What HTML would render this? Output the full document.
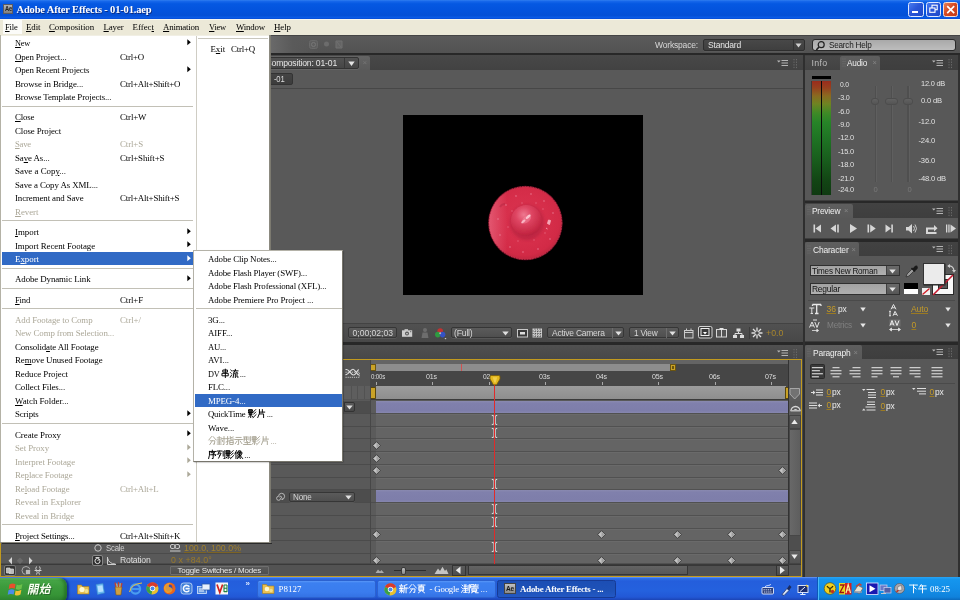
<!DOCTYPE html>
<html><head><meta charset="utf-8"><title>Adobe After Effects - 01-01.aep</title>
<style>
html,body{margin:0;padding:0;overflow:hidden;}
#c{position:absolute;left:0;top:0;width:960px;height:600px;overflow:hidden;}
body{width:960px;height:600px;overflow:hidden;position:relative;background:#2b2b2b;font-family:'Liberation Sans',sans-serif;}
#r{position:absolute;left:0;top:0;width:960px;height:600px;will-change:transform;filter:blur(0.45px);}
#r>div,#r>span,#r>svg{position:absolute;}
#r>span{white-space:pre;}
svg{overflow:visible;}
</style></head><body><div id="c"><div id="r">
<div style="left:-4px;top:35px;width:968px;height:542px;background:#282828;"></div>
<div style="left:-4px;top:35px;width:968px;height:17.9px;background:linear-gradient(#5b5b5b,#525252);"></div>
<div style="left:-4px;top:34.7px;width:968px;height:0.8px;background:#454545;"></div>
<div style="left:270px;top:35.5px;width:50px;height:17.4px;background:linear-gradient(90deg,#6a6a6a,#5a5a5a 45%,#57575700);"></div>
<svg style="left:309px;top:39px" width="40" height="12"><rect x="0.5" y="1.5" width="8" height="8" rx="2" fill="#5f5f5f" stroke="#6a6a6a"/><circle cx="4.5" cy="5.5" r="2" fill="none" stroke="#777"/><circle cx="17.5" cy="5" r="2.5" fill="#6c6c6c"/><path d="M27,2 l6,0 l0,7 l-6,0z M28,3 l4,5" fill="#646464" stroke="#707070"/></svg>
<span style="left:655px;top:39.00px;line-height:12px;font-family:'Liberation Sans',sans-serif;font-size:8.5px;color:#d8d8d8;letter-spacing:-0.173px;">Workspace:</span>
<div style="left:703px;top:38.5px;width:102px;height:12.5px;background:linear-gradient(#484848,#3f3f3f);border:1px solid #2e2e2e;border-radius:2px;box-sizing:border-box;box-shadow:0 0.8px 0 #5e5e5e;"></div>
<span style="left:708px;top:39.00px;line-height:12px;font-family:'Liberation Sans',sans-serif;font-size:8.5px;color:#e6e6e6;letter-spacing:-0.188px;">Standard</span>
<div style="left:793px;top:39.5px;width:1px;height:10.5px;background:#333;"></div>
<svg style="left:795px;top:43px" width="8" height="6"><path d="M0.5,0.5 L6.5,0.5 L3.5,4.5Z" fill="#d0d0d0"/></svg>
<div style="left:812px;top:38.5px;width:143.5px;height:12.7px;background:linear-gradient(#a9a9a9,#bdbdbd);border:1px solid #2a2a2a;border-radius:3px;box-sizing:border-box;"></div>
<svg style="left:815px;top:39.5px" width="12" height="12"><circle cx="6.2" cy="4.7" r="3" fill="none" stroke="#222" stroke-width="1.2"/><path d="M4,7 L1.3,10" stroke="#222" stroke-width="1.6"/></svg>
<span style="left:828.5px;top:39.00px;line-height:12px;font-family:'Liberation Sans',sans-serif;font-size:8.5px;color:#1a1a1a;letter-spacing:-0.220px;transform:scaleX(0.958);transform-origin:0 50%;">Search Help</span>
<div style="left:0px;top:55px;width:802.5px;height:287px;background:#595959;"></div>
<div style="left:0px;top:55px;width:802.5px;height:15px;background:linear-gradient(#484848,#424242);"></div>
<div style="left:270px;top:55.5px;width:100px;height:14.5px;background:linear-gradient(#646464,#5a5a5a);border-radius:2px 2px 0 0;"></div>
<div style="left:258px;top:57.3px;width:100.7px;height:11.7px;background:linear-gradient(#525252,#464646);border:1px solid #333;border-radius:2px;box-sizing:border-box;box-shadow:0 0.8px 0 #6a6a6a;"></div>
<span style="left:265.5px;top:57.00px;line-height:12px;font-family:'Liberation Sans',sans-serif;font-size:8.6px;color:#e6e6e6;letter-spacing:-0.168px;">Composition: 01-01</span>
<div style="left:343.7px;top:58.3px;width:1px;height:9.7px;background:#383838;"></div>
<svg style="left:347.5px;top:60.5px" width="8" height="6"><path d="M0.3,0.5 L6.7,0.5 L3.5,5Z" fill="#e4e4e4"/></svg>
<span style="left:362.5px;top:57.00px;line-height:12px;font-family:'Liberation Sans',sans-serif;font-size:8px;color:#757575;">×</span>
<svg style="left:776.5px;top:58.5px" width="12" height="9"><path d="M0,1.5 L3.6,1.5 L1.8,3.6Z" fill="#b8b8b8"/><path d="M4.5,1.5 H11 M4.5,4 H11 M4.5,6.5 H11" stroke="#b4b4b4" stroke-width="1.05"/></svg>
<svg style="left:792.5px;top:57.5px" width="6" height="12"><path d="M1,1 V11 M3.5,1 V11" stroke="#6a6a6a" stroke-width="1" stroke-dasharray="1.3,1.3"/></svg>
<div style="left:0px;top:70px;width:802.5px;height:17.7px;background:#595959;"></div>
<div style="left:0px;top:87.7px;width:802.5px;height:1px;background:#474747;"></div>
<div style="left:262px;top:73px;width:30.5px;height:12px;background:linear-gradient(#444,#3c3c3c);border:1px solid #333;border-radius:2px;box-sizing:border-box;"></div>
<span style="left:274px;top:73.30px;line-height:12px;font-family:'Liberation Sans',sans-serif;font-size:8.8px;color:#dcdcdc;letter-spacing:-0.220px;transform:scaleX(0.871);transform-origin:0 50%;">-01</span>
<div style="left:403px;top:115.3px;width:239.7px;height:180px;background:#000;"></div>
<svg style="left:483px;top:180px" width="86" height="86" viewBox="-43 -43 86 86">
<defs><radialGradient id="bg1" cx="0.48" cy="0.45" r="0.56"><stop offset="0" stop-color="#d93450"/><stop offset="0.6" stop-color="#d62e4a"/><stop offset="0.88" stop-color="#d22a46"/><stop offset="1" stop-color="#c0263f"/></radialGradient>
<radialGradient id="bg2" cx="0.42" cy="0.32" r="0.75"><stop offset="0" stop-color="#ee7890"/><stop offset="0.35" stop-color="#de4562"/><stop offset="0.8" stop-color="#c62844"/><stop offset="1" stop-color="#b01e3a"/></radialGradient>
<linearGradient id="bg3" x1="0" y1="0" x2="1" y2="0"><stop offset="0" stop-color="#f07a92" stop-opacity="0.55"/><stop offset="0.25" stop-color="#f07a92" stop-opacity="0"/></linearGradient>
<filter id="bl"><feGaussianBlur stdDeviation="0.7"/></filter><filter id="bl2"><feGaussianBlur stdDeviation="1.4"/></filter></defs>
<circle cx="-0.6" cy="0" r="37.3" fill="#6a1022" filter="url(#bl)"/>
<circle cx="-0.6" cy="0" r="36.3" fill="url(#bg1)" stroke="#cc3a56" stroke-width="0.9" stroke-dasharray="1.5,1.2"/>
<circle cx="-0.6" cy="0" r="36.3" fill="url(#bg3)"/>
<ellipse cx="1" cy="-0.5" rx="17" ry="17.5" fill="#a81c3a" opacity="0.5" filter="url(#bl2)"/>
<circle cx="0.3" cy="-2.6" r="15.4" fill="url(#bg2)" filter="url(#bl)"/>
<g><ellipse cx="2.2" cy="-6.2" rx="3" ry="1.25" transform="rotate(-40 2.2 -6.2)" fill="#ffe0e6" opacity="0.9"/><ellipse cx="-2.6" cy="-1.6" rx="2.6" ry="1.15" transform="rotate(-40 -2.6 -1.6)" fill="#ffd6de" opacity="0.85"/><ellipse cx="0.5" cy="-3.6" rx="5.5" ry="3" transform="rotate(-40 0.5 -3.6)" fill="#f8a0b4" opacity="0.35"/>
<path d="M22.5,-3 l2,0.5 l-1,4 l-2,-1z M20,5 l1.5,1" fill="#f8b8c6" stroke="#f8b8c6" stroke-width="0.9" opacity="0.9"/>
<path d="M-26,-16 q2,-3 5,-3" stroke="#b02640" stroke-width="2" fill="none" opacity="0.45"/></g>
<g fill="#ee8aa0" opacity="0.5"><circle cx="-20" cy="-18" r=".9"/><circle cx="-10" cy="-27" r=".9"/><circle cx="5" cy="-29" r=".9"/><circle cx="18" cy="-22" r=".9"/><circle cx="27" cy="-10" r=".9"/><circle cx="-28" cy="-4" r=".9"/><circle cx="-26" cy="12" r=".9"/><circle cx="-16" cy="24" r=".9"/><circle cx="-3" cy="29" r=".9"/><circle cx="12" cy="26" r=".9"/><circle cx="24" cy="16" r=".9"/><circle cx="-14" cy="-12" r=".8"/><circle cx="-18" cy="4" r=".8"/><circle cx="-8" cy="18" r=".8"/><circle cx="8" cy="17" r=".8"/><circle cx="17" cy="-14" r=".8"/><circle cx="19" cy="10" r=".8"/><circle cx="-4" cy="-20" r=".8"/><circle cx="10" cy="-20" r=".8"/></g>
</svg>
<div style="left:0px;top:323.2px;width:802.5px;height:18.5px;background:linear-gradient(#515151,#484848);"></div>
<div style="left:0px;top:323.2px;width:802.5px;height:1px;background:#434343;"></div>
<div style="left:348px;top:327.2px;width:49px;height:11px;background:linear-gradient(#5b5b5b,#4f4f4f);border:1px solid #363636;border-radius:2px;box-sizing:border-box;box-shadow:0 0.8px 0 #5c5c5c;"></div>
<span style="left:352.5px;top:327.00px;line-height:12px;font-family:'Liberation Sans',sans-serif;font-size:8.6px;color:#d6d6d6;letter-spacing:-0.013px;">0;00;02;03</span>
<svg style="left:402px;top:328.5px" width="12" height="9"><rect x="0" y="1.3" width="10.2" height="6.5" fill="#cfcfcf"/><rect x="2.5" y="0.2" width="3.5" height="1.6" fill="#cfcfcf"/><circle cx="5" cy="4.6" r="2" fill="#555"/><circle cx="5" cy="4.6" r="0.9" fill="#cfcfcf"/><rect x="8" y="2.2" width="1.3" height="1" fill="#666"/></svg>
<svg style="left:420px;top:327px" width="10" height="12"><circle cx="5" cy="3" r="2" fill="#6d6d6d"/><path d="M1.5,11 L2.5,5.5 H7.5 L8.5,11Z" fill="#6d6d6d"/></svg>
<svg style="left:434px;top:326.5px" width="14" height="13"><circle cx="6.2" cy="4" r="2.8" fill="#c23232"/><circle cx="3.8" cy="7.6" r="2.8" fill="#2f9a40"/><circle cx="8.6" cy="7.6" r="2.8" fill="#3552c4"/><circle cx="6.2" cy="6.3" r="1" fill="#b8b8b8"/><path d="M10.5,11 l2,0 l-1,1.5z" fill="#ccc"/></svg>
<div style="left:450.5px;top:327.2px;width:61.5px;height:11px;background:linear-gradient(#5b5b5b,#4f4f4f);border:1px solid #363636;border-radius:2px;box-sizing:border-box;box-shadow:0 0.8px 0 #5c5c5c;"></div>
<span style="left:454px;top:326.80px;line-height:12px;font-family:'Liberation Sans',sans-serif;font-size:8.8px;color:#d6d6d6;letter-spacing:-0.220px;transform:scaleX(0.988);transform-origin:0 50%;">(Full)</span>
<svg style="left:502px;top:331px" width="8" height="6"><path d="M0.3,0.5 L6.7,0.5 L3.5,4.6Z" fill="#e0e0e0"/></svg>
<svg style="left:516.5px;top:328.5px" width="12" height="9"><rect x="0.5" y="0.5" width="10" height="7.5" fill="#3a3a3a" stroke="#c8c8c8"/><rect x="3" y="3" width="5" height="2.5" fill="#ddd"/></svg>
<svg style="left:532px;top:328px" width="11" height="10"><rect x="0.5" y="0.5" width="9.5" height="9" fill="#cfcfcf"/><path d="M0.5,3 H10 M0.5,5.5 H10 M0.5,8 H10 M3,0.5 V9.5 M5.5,0.5 V9.5 M8,0.5 V9.5" stroke="#555" stroke-width="1" stroke-dasharray="1.2,1.3"/></svg>
<div style="left:547px;top:327.2px;width:77px;height:11px;background:linear-gradient(#5b5b5b,#4f4f4f);border:1px solid #363636;border-radius:2px;box-sizing:border-box;box-shadow:0 0.8px 0 #5c5c5c;"></div>
<span style="left:552.3px;top:327.00px;line-height:12px;font-family:'Liberation Sans',sans-serif;font-size:8.6px;color:#d6d6d6;letter-spacing:-0.220px;transform:scaleX(0.985);transform-origin:0 50%;">Active Camera</span>
<div style="left:611.5px;top:328px;width:1px;height:9.5px;background:#6d6d6d;"></div>
<svg style="left:614.5px;top:331px" width="8" height="6"><path d="M0.3,0.5 L6.7,0.5 L3.5,4.6Z" fill="#e0e0e0"/></svg>
<div style="left:628.5px;top:327.2px;width:50.5px;height:11px;background:linear-gradient(#5b5b5b,#4f4f4f);border:1px solid #363636;border-radius:2px;box-sizing:border-box;box-shadow:0 0.8px 0 #5c5c5c;"></div>
<span style="left:633.5px;top:327.00px;line-height:12px;font-family:'Liberation Sans',sans-serif;font-size:8.6px;color:#d6d6d6;letter-spacing:-0.220px;transform:scaleX(0.966);transform-origin:0 50%;">1 View</span>
<div style="left:666px;top:328px;width:1px;height:9.5px;background:#6d6d6d;"></div>
<svg style="left:668.5px;top:331px" width="8" height="6"><path d="M0.3,0.5 L6.7,0.5 L3.5,4.6Z" fill="#e0e0e0"/></svg>
<svg style="left:684px;top:327.5px" width="10" height="11"><rect x="0.5" y="2.5" width="8.5" height="7.5" fill="#555" stroke="#ccc"/><path d="M0.5,4.5 H9 M2.5,0.5 V3 M7,0.5 V3" stroke="#ccc"/></svg>
<svg style="left:697.5px;top:326px" width="15" height="13"><rect x="0.5" y="0.5" width="13.5" height="11.5" rx="1.5" fill="#3a3a3a" stroke="#d4d4d4"/><rect x="3" y="2.5" width="8" height="7" fill="none" stroke="#eee"/><path d="M5,6 h4 l-2,2.4z" fill="#fff"/></svg>
<svg style="left:715.5px;top:328px" width="12" height="10"><rect x="0.5" y="1.5" width="10" height="7.5" fill="#555" stroke="#d8d8d8"/><path d="M5.5,1.5 V9" stroke="#d8d8d8"/><path d="M3,0 h5 l-2.5,2.5z" fill="#e8e8e8"/></svg>
<svg style="left:732.5px;top:327.5px" width="12" height="11"><rect x="3.5" y="0.5" width="4" height="3" fill="#ddd"/><rect x="0" y="7" width="4" height="3" fill="#ddd"/><rect x="7" y="7" width="4" height="3" fill="#ddd"/><path d="M5.5,3.5 V5.5 M2,7 V5.5 H9 V7" stroke="#ddd" fill="none"/></svg>
<div style="left:748.5px;top:327px;width:1px;height:11.5px;background:#3c3c3c;"></div>
<svg style="left:751px;top:327px" width="12" height="12"><g stroke="#e0e0e0" stroke-width="1.3"><path d="M6,0.5 V11.5 M0.5,6 H11.5 M2,2 L10,10 M10,2 L2,10"/></g><circle cx="6" cy="6" r="1.8" fill="#4a4a4a"/></svg>
<span style="left:766px;top:327.30px;line-height:12px;font-family:'Liberation Sans',sans-serif;font-size:8.8px;color:#a8862c;letter-spacing:0.031px;">+0.0</span>
<div style="left:0px;top:345px;width:802.5px;height:232px;background:#4b4b4b;"></div>
<div style="left:0px;top:345px;width:802.5px;height:13.7px;background:linear-gradient(#505050,#484848);"></div>
<svg style="left:776.5px;top:348.5px" width="12" height="9"><path d="M0,1.5 L3.6,1.5 L1.8,3.6Z" fill="#b8b8b8"/><path d="M4.5,1.5 H11 M4.5,4 H11 M4.5,6.5 H11" stroke="#b4b4b4" stroke-width="1.05"/></svg>
<svg style="left:792.5px;top:347.5px" width="6" height="12"><path d="M1,1 V11 M3.5,1 V11" stroke="#6a6a6a" stroke-width="1" stroke-dasharray="1.3,1.3"/></svg>
<div style="left:0px;top:358.7px;width:802px;height:218.3px;border:1.3px solid #c29a1e;box-sizing:border-box;"></div>
<div style="left:1.3px;top:360px;width:369px;height:216px;background:#555;"></div>
<div style="left:370px;top:360px;width:430.7px;height:216px;background:#484848;"></div>
<div style="left:344px;top:360px;width:26px;height:26px;background:#545454;"></div>
<svg style="left:345px;top:368px" width="16" height="11"><path d="M0.5,1.8 C3.5,-0.5 5.5,7 8.5,7 S12,1.5 14,1.8 M0.5,6.5 C3,8 5.5,1 8,1.2 S12.5,8 14,6.5" fill="none" stroke="#e2e2e2" stroke-width="1.1"/><path d="M0.5,4.2 H14.3 V9.3 H0.5" fill="none" stroke="#d0d0d0" stroke-width="0.9" stroke-dasharray="1.2,0.9"/></svg>
<div style="left:344px;top:386px;width:26px;height:13px;background:#5e5e5e;"></div>
<div style="left:350.5px;top:386px;width:1px;height:13px;background:#525252;"></div>
<div style="left:357px;top:386px;width:1px;height:13px;background:#525252;"></div>
<div style="left:363.5px;top:386px;width:1px;height:13px;background:#525252;"></div>
<div style="left:370px;top:360px;width:431px;height:4.2px;background:#646464;"></div>
<div style="left:370px;top:363.6px;width:418px;height:22.4px;background:#464646;border-radius:0 4px 0 0;"></div>
<div style="left:375.5px;top:364px;width:296.5px;height:6.7px;background:#8d8d8d;"></div>
<div style="left:370px;top:364px;width:5.5px;height:6.7px;background:#c9a227;border:1px solid #6b5510;box-sizing:border-box;"></div>
<div style="left:670px;top:363.7px;width:5.5px;height:7.3px;background:#c9a227;border:1px solid #6b5510;box-sizing:border-box;"></div>
<div style="left:672px;top:365.5px;width:1.5px;height:3.5px;background:#6b5510;"></div>
<div style="left:461.3px;top:364px;width:1.2px;height:6.7px;background:#d05050;"></div>
<div style="left:375.5px;top:382.3px;width:1px;height:3px;background:#a8a8a8;"></div>
<span style="left:371px;top:371.30px;line-height:12px;font-family:'Liberation Sans',sans-serif;font-size:8px;color:#dedede;letter-spacing:-0.220px;transform:scaleX(0.758);transform-origin:0 50%;">0:00s</span>
<div style="left:432.0px;top:382.3px;width:1px;height:3px;background:#a8a8a8;"></div>
<span style="left:426.0px;top:371.30px;line-height:12px;font-family:'Liberation Sans',sans-serif;font-size:8px;color:#dedede;letter-spacing:-0.220px;transform:scaleX(0.882);transform-origin:0 50%;">01s</span>
<div style="left:488.5px;top:382.3px;width:1px;height:3px;background:#a8a8a8;"></div>
<span style="left:482.5px;top:371.30px;line-height:12px;font-family:'Liberation Sans',sans-serif;font-size:8px;color:#dedede;letter-spacing:-0.220px;transform:scaleX(0.827);transform-origin:0 50%;">02</span>
<div style="left:545.0px;top:382.3px;width:1px;height:3px;background:#a8a8a8;"></div>
<span style="left:539.0px;top:371.30px;line-height:12px;font-family:'Liberation Sans',sans-serif;font-size:8px;color:#dedede;letter-spacing:-0.220px;transform:scaleX(0.882);transform-origin:0 50%;">03s</span>
<div style="left:601.5px;top:382.3px;width:1px;height:3px;background:#a8a8a8;"></div>
<span style="left:595.5px;top:371.30px;line-height:12px;font-family:'Liberation Sans',sans-serif;font-size:8px;color:#dedede;letter-spacing:-0.220px;transform:scaleX(0.882);transform-origin:0 50%;">04s</span>
<div style="left:658.0px;top:382.3px;width:1px;height:3px;background:#a8a8a8;"></div>
<span style="left:652.0px;top:371.30px;line-height:12px;font-family:'Liberation Sans',sans-serif;font-size:8px;color:#dedede;letter-spacing:-0.220px;transform:scaleX(0.882);transform-origin:0 50%;">05s</span>
<div style="left:714.5px;top:382.3px;width:1px;height:3px;background:#a8a8a8;"></div>
<span style="left:708.5px;top:371.30px;line-height:12px;font-family:'Liberation Sans',sans-serif;font-size:8px;color:#dedede;letter-spacing:-0.220px;transform:scaleX(0.882);transform-origin:0 50%;">06s</span>
<div style="left:771.0px;top:382.3px;width:1px;height:3px;background:#a8a8a8;"></div>
<span style="left:765.0px;top:371.30px;line-height:12px;font-family:'Liberation Sans',sans-serif;font-size:8px;color:#dedede;letter-spacing:-0.220px;transform:scaleX(0.882);transform-origin:0 50%;">07s</span>
<div style="left:375.5px;top:385.8px;width:410px;height:13.4px;background:linear-gradient(#9c9c9c,#8e8e8e);"></div>
<div style="left:370px;top:386.5px;width:5.5px;height:12px;background:#c9a227;border:1px solid #5a470c;box-sizing:border-box;border-radius:1px;"></div>
<div style="left:785px;top:386.5px;width:3.5px;height:12px;background:#c9a227;border:1px solid #5a470c;box-sizing:border-box;"></div>
<div style="left:370px;top:399.2px;width:431px;height:1.4px;background:#3b3b3b;"></div>
<div style="left:1.3px;top:399.5px;width:799px;height:165px;background:#595959;"></div>
<div style="left:1.3px;top:401.1px;width:369px;height:12.75px;background:#595959;border-bottom:1px solid #4b4b4b;box-sizing:border-box;"></div>
<div style="left:375.5px;top:401.1px;width:412.5px;height:12.75px;background:#646464;border-bottom:1px solid #515151;box-sizing:border-box;"></div>
<div style="left:375.5px;top:401.1px;width:412.5px;height:0.6px;background:#6a6a6a;"></div>
<div style="left:370px;top:401.1px;width:5.5px;height:12.75px;background:#5b5b5b;border-bottom:1px solid #4d4d4d;box-sizing:border-box;"></div>
<div style="left:1.3px;top:413.85px;width:369px;height:12.75px;background:#595959;border-bottom:1px solid #4b4b4b;box-sizing:border-box;"></div>
<div style="left:375.5px;top:413.85px;width:412.5px;height:12.75px;background:#646464;border-bottom:1px solid #515151;box-sizing:border-box;"></div>
<div style="left:375.5px;top:413.85px;width:412.5px;height:0.6px;background:#6a6a6a;"></div>
<div style="left:370px;top:413.85px;width:5.5px;height:12.75px;background:#5b5b5b;border-bottom:1px solid #4d4d4d;box-sizing:border-box;"></div>
<div style="left:1.3px;top:426.6px;width:369px;height:12.75px;background:#595959;border-bottom:1px solid #4b4b4b;box-sizing:border-box;"></div>
<div style="left:375.5px;top:426.6px;width:412.5px;height:12.75px;background:#646464;border-bottom:1px solid #515151;box-sizing:border-box;"></div>
<div style="left:375.5px;top:426.6px;width:412.5px;height:0.6px;background:#6a6a6a;"></div>
<div style="left:370px;top:426.6px;width:5.5px;height:12.75px;background:#5b5b5b;border-bottom:1px solid #4d4d4d;box-sizing:border-box;"></div>
<div style="left:1.3px;top:439.35px;width:369px;height:12.75px;background:#595959;border-bottom:1px solid #4b4b4b;box-sizing:border-box;"></div>
<div style="left:375.5px;top:439.35px;width:412.5px;height:12.75px;background:#646464;border-bottom:1px solid #515151;box-sizing:border-box;"></div>
<div style="left:375.5px;top:439.35px;width:412.5px;height:0.6px;background:#6a6a6a;"></div>
<div style="left:370px;top:439.35px;width:5.5px;height:12.75px;background:#5b5b5b;border-bottom:1px solid #4d4d4d;box-sizing:border-box;"></div>
<div style="left:1.3px;top:452.1px;width:369px;height:12.75px;background:#595959;border-bottom:1px solid #4b4b4b;box-sizing:border-box;"></div>
<div style="left:375.5px;top:452.1px;width:412.5px;height:12.75px;background:#646464;border-bottom:1px solid #515151;box-sizing:border-box;"></div>
<div style="left:375.5px;top:452.1px;width:412.5px;height:0.6px;background:#6a6a6a;"></div>
<div style="left:370px;top:452.1px;width:5.5px;height:12.75px;background:#5b5b5b;border-bottom:1px solid #4d4d4d;box-sizing:border-box;"></div>
<div style="left:1.3px;top:464.85px;width:369px;height:12.75px;background:#595959;border-bottom:1px solid #4b4b4b;box-sizing:border-box;"></div>
<div style="left:375.5px;top:464.85px;width:412.5px;height:12.75px;background:#646464;border-bottom:1px solid #515151;box-sizing:border-box;"></div>
<div style="left:375.5px;top:464.85px;width:412.5px;height:0.6px;background:#6a6a6a;"></div>
<div style="left:370px;top:464.85px;width:5.5px;height:12.75px;background:#5b5b5b;border-bottom:1px solid #4d4d4d;box-sizing:border-box;"></div>
<div style="left:1.3px;top:477.6px;width:369px;height:12.75px;background:#595959;border-bottom:1px solid #4b4b4b;box-sizing:border-box;"></div>
<div style="left:375.5px;top:477.6px;width:412.5px;height:12.75px;background:#646464;border-bottom:1px solid #515151;box-sizing:border-box;"></div>
<div style="left:375.5px;top:477.6px;width:412.5px;height:0.6px;background:#6a6a6a;"></div>
<div style="left:370px;top:477.6px;width:5.5px;height:12.75px;background:#5b5b5b;border-bottom:1px solid #4d4d4d;box-sizing:border-box;"></div>
<div style="left:1.3px;top:490.35px;width:369px;height:12.75px;background:#595959;border-bottom:1px solid #4b4b4b;box-sizing:border-box;"></div>
<div style="left:375.5px;top:490.35px;width:412.5px;height:12.75px;background:#646464;border-bottom:1px solid #515151;box-sizing:border-box;"></div>
<div style="left:375.5px;top:490.35px;width:412.5px;height:0.6px;background:#6a6a6a;"></div>
<div style="left:370px;top:490.35px;width:5.5px;height:12.75px;background:#5b5b5b;border-bottom:1px solid #4d4d4d;box-sizing:border-box;"></div>
<div style="left:1.3px;top:503.1px;width:369px;height:12.75px;background:#595959;border-bottom:1px solid #4b4b4b;box-sizing:border-box;"></div>
<div style="left:375.5px;top:503.1px;width:412.5px;height:12.75px;background:#646464;border-bottom:1px solid #515151;box-sizing:border-box;"></div>
<div style="left:375.5px;top:503.1px;width:412.5px;height:0.6px;background:#6a6a6a;"></div>
<div style="left:370px;top:503.1px;width:5.5px;height:12.75px;background:#5b5b5b;border-bottom:1px solid #4d4d4d;box-sizing:border-box;"></div>
<div style="left:1.3px;top:515.85px;width:369px;height:12.75px;background:#595959;border-bottom:1px solid #4b4b4b;box-sizing:border-box;"></div>
<div style="left:375.5px;top:515.85px;width:412.5px;height:12.75px;background:#646464;border-bottom:1px solid #515151;box-sizing:border-box;"></div>
<div style="left:375.5px;top:515.85px;width:412.5px;height:0.6px;background:#6a6a6a;"></div>
<div style="left:370px;top:515.85px;width:5.5px;height:12.75px;background:#5b5b5b;border-bottom:1px solid #4d4d4d;box-sizing:border-box;"></div>
<div style="left:1.3px;top:528.6px;width:369px;height:12.75px;background:#595959;border-bottom:1px solid #4b4b4b;box-sizing:border-box;"></div>
<div style="left:375.5px;top:528.6px;width:412.5px;height:12.75px;background:#646464;border-bottom:1px solid #515151;box-sizing:border-box;"></div>
<div style="left:375.5px;top:528.6px;width:412.5px;height:0.6px;background:#6a6a6a;"></div>
<div style="left:370px;top:528.6px;width:5.5px;height:12.75px;background:#5b5b5b;border-bottom:1px solid #4d4d4d;box-sizing:border-box;"></div>
<div style="left:1.3px;top:541.35px;width:369px;height:12.75px;background:#595959;border-bottom:1px solid #4b4b4b;box-sizing:border-box;"></div>
<div style="left:375.5px;top:541.35px;width:412.5px;height:12.75px;background:#646464;border-bottom:1px solid #515151;box-sizing:border-box;"></div>
<div style="left:375.5px;top:541.35px;width:412.5px;height:0.6px;background:#6a6a6a;"></div>
<div style="left:370px;top:541.35px;width:5.5px;height:12.75px;background:#5b5b5b;border-bottom:1px solid #4d4d4d;box-sizing:border-box;"></div>
<div style="left:1.3px;top:554.1px;width:369px;height:9.899999999999977px;background:#595959;border-bottom:1px solid #4b4b4b;box-sizing:border-box;"></div>
<div style="left:375.5px;top:554.1px;width:412.5px;height:9.899999999999977px;background:#646464;border-bottom:1px solid #515151;box-sizing:border-box;"></div>
<div style="left:375.5px;top:554.1px;width:412.5px;height:0.6px;background:#6a6a6a;"></div>
<div style="left:370px;top:554.1px;width:5.5px;height:9.899999999999977px;background:#5b5b5b;border-bottom:1px solid #4d4d4d;box-sizing:border-box;"></div>
<div style="left:1.3px;top:400.8px;width:369px;height:11.95px;background:#4d4d4d;"></div>
<div style="left:375.7px;top:400.75px;width:412.3px;height:12.2px;background:linear-gradient(#8a8ab0 0%,#8080ac 18%,#7e7eaa 80%,#8686ae 100%);"></div>
<div style="left:1.3px;top:490.05px;width:369px;height:11.95px;background:#4d4d4d;"></div>
<div style="left:375.7px;top:490.0px;width:412.3px;height:12.2px;background:linear-gradient(#8a8ab0 0%,#8080ac 18%,#7e7eaa 80%,#8686ae 100%);"></div>
<div style="left:369.6px;top:360px;width:0.9px;height:204px;background:#474747;"></div>
<div style="left:344px;top:401.5px;width:10.5px;height:10.5px;background:linear-gradient(#5a5a5a,#484848);border:1px solid #333;box-sizing:border-box;border-radius:0 2px 2px 0;"></div>
<svg style="left:345.5px;top:404.5px" width="8" height="6"><path d="M0.3,0.5 L6.7,0.5 L3.5,4.6Z" fill="#e0e0e0"/></svg>
<svg style="left:274.5px;top:492.5px" width="10" height="9"><path d="M4.6,4.3 a1,1 0 1 1 1,1 a2,2 0 1 1 -2,-2 a3,3 0 1 1 3,3 h1.6" fill="none" stroke="#c8c8c8" stroke-width="0.85"/></svg>
<div style="left:288.7px;top:491.8px;width:66px;height:10px;background:linear-gradient(#5b5b5b,#4f4f4f);border:1px solid #363636;border-radius:2px;box-sizing:border-box;box-shadow:0 0.8px 0 #5c5c5c;"></div>
<span style="left:293px;top:491.00px;line-height:12px;font-family:'Liberation Sans',sans-serif;font-size:8.6px;color:#d6d6d6;letter-spacing:-0.220px;transform:scaleX(0.941);transform-origin:0 50%;">None</span>
<svg style="left:344.5px;top:494.5px" width="8" height="6"><path d="M0.3,0.5 L6.7,0.5 L3.5,4.6Z" fill="#e0e0e0"/></svg>
<svg style="left:371.8px;top:440.925px" width="9" height="9"><path d="M4.5,0.7 L8.3,4.5 L4.5,8.3 L0.7,4.5Z" fill="#c4c4c4" stroke="#363636" stroke-width="0.9"/><path d="M4.5,1.8 L7.2,4.5 L4.5,7.2Z" fill="#a0a0a0"/></svg>
<svg style="left:371.8px;top:453.675px" width="9" height="9"><path d="M4.5,0.7 L8.3,4.5 L4.5,8.3 L0.7,4.5Z" fill="#c4c4c4" stroke="#363636" stroke-width="0.9"/><path d="M4.5,1.8 L7.2,4.5 L4.5,7.2Z" fill="#a0a0a0"/></svg>
<svg style="left:371.8px;top:466.425px" width="9" height="9"><path d="M4.5,0.7 L8.3,4.5 L4.5,8.3 L0.7,4.5Z" fill="#c4c4c4" stroke="#363636" stroke-width="0.9"/><path d="M4.5,1.8 L7.2,4.5 L4.5,7.2Z" fill="#a0a0a0"/></svg>
<svg style="left:777.5px;top:466.425px" width="9" height="9"><path d="M4.5,0.7 L8.3,4.5 L4.5,8.3 L0.7,4.5Z" fill="#c4c4c4" stroke="#363636" stroke-width="0.9"/><path d="M4.5,1.8 L7.2,4.5 L4.5,7.2Z" fill="#a0a0a0"/></svg>
<svg style="left:371.8px;top:530.1750000000001px" width="9" height="9"><path d="M4.5,0.7 L8.3,4.5 L4.5,8.3 L0.7,4.5Z" fill="#c4c4c4" stroke="#363636" stroke-width="0.9"/><path d="M4.5,1.8 L7.2,4.5 L4.5,7.2Z" fill="#a0a0a0"/></svg>
<svg style="left:596.8px;top:530.1750000000001px" width="9" height="9"><path d="M4.5,0.7 L8.3,4.5 L4.5,8.3 L0.7,4.5Z" fill="#c4c4c4" stroke="#363636" stroke-width="0.9"/><path d="M4.5,1.8 L7.2,4.5 L4.5,7.2Z" fill="#a0a0a0"/></svg>
<svg style="left:673.0px;top:530.1750000000001px" width="9" height="9"><path d="M4.5,0.7 L8.3,4.5 L4.5,8.3 L0.7,4.5Z" fill="#c4c4c4" stroke="#363636" stroke-width="0.9"/><path d="M4.5,1.8 L7.2,4.5 L4.5,7.2Z" fill="#a0a0a0"/></svg>
<svg style="left:727.0px;top:530.1750000000001px" width="9" height="9"><path d="M4.5,0.7 L8.3,4.5 L4.5,8.3 L0.7,4.5Z" fill="#c4c4c4" stroke="#363636" stroke-width="0.9"/><path d="M4.5,1.8 L7.2,4.5 L4.5,7.2Z" fill="#a0a0a0"/></svg>
<svg style="left:777.5px;top:530.1750000000001px" width="9" height="9"><path d="M4.5,0.7 L8.3,4.5 L4.5,8.3 L0.7,4.5Z" fill="#c4c4c4" stroke="#363636" stroke-width="0.9"/><path d="M4.5,1.8 L7.2,4.5 L4.5,7.2Z" fill="#a0a0a0"/></svg>
<svg style="left:371.8px;top:555.6750000000001px" width="9" height="9"><path d="M4.5,0.7 L8.3,4.5 L4.5,8.3 L0.7,4.5Z" fill="#c4c4c4" stroke="#363636" stroke-width="0.9"/><path d="M4.5,1.8 L7.2,4.5 L4.5,7.2Z" fill="#a0a0a0"/></svg>
<svg style="left:596.8px;top:555.6750000000001px" width="9" height="9"><path d="M4.5,0.7 L8.3,4.5 L4.5,8.3 L0.7,4.5Z" fill="#c4c4c4" stroke="#363636" stroke-width="0.9"/><path d="M4.5,1.8 L7.2,4.5 L4.5,7.2Z" fill="#a0a0a0"/></svg>
<svg style="left:673.0px;top:555.6750000000001px" width="9" height="9"><path d="M4.5,0.7 L8.3,4.5 L4.5,8.3 L0.7,4.5Z" fill="#c4c4c4" stroke="#363636" stroke-width="0.9"/><path d="M4.5,1.8 L7.2,4.5 L4.5,7.2Z" fill="#a0a0a0"/></svg>
<svg style="left:727.0px;top:555.6750000000001px" width="9" height="9"><path d="M4.5,0.7 L8.3,4.5 L4.5,8.3 L0.7,4.5Z" fill="#c4c4c4" stroke="#363636" stroke-width="0.9"/><path d="M4.5,1.8 L7.2,4.5 L4.5,7.2Z" fill="#a0a0a0"/></svg>
<svg style="left:777.5px;top:555.6750000000001px" width="9" height="9"><path d="M4.5,0.7 L8.3,4.5 L4.5,8.3 L0.7,4.5Z" fill="#c4c4c4" stroke="#363636" stroke-width="0.9"/><path d="M4.5,1.8 L7.2,4.5 L4.5,7.2Z" fill="#a0a0a0"/></svg>
<svg style="left:490.8px;top:414.925px" width="7" height="10"><path d="M0.8,0.6 H2.2 Q3,0.7 3,1.8 V8.2 Q3,9.3 2.2,9.4 H0.8 M6.2,0.6 H4.9 Q4.2,0.7 4.2,1.8 V8.2 Q4.2,9.3 4.9,9.4 H6.2" fill="none" stroke="#ececec" stroke-width="0.95"/></svg>
<svg style="left:490.8px;top:427.675px" width="7" height="10"><path d="M0.8,0.6 H2.2 Q3,0.7 3,1.8 V8.2 Q3,9.3 2.2,9.4 H0.8 M6.2,0.6 H4.9 Q4.2,0.7 4.2,1.8 V8.2 Q4.2,9.3 4.9,9.4 H6.2" fill="none" stroke="#ececec" stroke-width="0.95"/></svg>
<svg style="left:490.8px;top:478.675px" width="7" height="10"><path d="M0.8,0.6 H2.2 Q3,0.7 3,1.8 V8.2 Q3,9.3 2.2,9.4 H0.8 M6.2,0.6 H4.9 Q4.2,0.7 4.2,1.8 V8.2 Q4.2,9.3 4.9,9.4 H6.2" fill="none" stroke="#ececec" stroke-width="0.95"/></svg>
<svg style="left:490.8px;top:504.175px" width="7" height="10"><path d="M0.8,0.6 H2.2 Q3,0.7 3,1.8 V8.2 Q3,9.3 2.2,9.4 H0.8 M6.2,0.6 H4.9 Q4.2,0.7 4.2,1.8 V8.2 Q4.2,9.3 4.9,9.4 H6.2" fill="none" stroke="#ececec" stroke-width="0.95"/></svg>
<svg style="left:490.8px;top:516.9250000000001px" width="7" height="10"><path d="M0.8,0.6 H2.2 Q3,0.7 3,1.8 V8.2 Q3,9.3 2.2,9.4 H0.8 M6.2,0.6 H4.9 Q4.2,0.7 4.2,1.8 V8.2 Q4.2,9.3 4.9,9.4 H6.2" fill="none" stroke="#ececec" stroke-width="0.95"/></svg>
<svg style="left:490.8px;top:542.4250000000001px" width="7" height="10"><path d="M0.8,0.6 H2.2 Q3,0.7 3,1.8 V8.2 Q3,9.3 2.2,9.4 H0.8 M6.2,0.6 H4.9 Q4.2,0.7 4.2,1.8 V8.2 Q4.2,9.3 4.9,9.4 H6.2" fill="none" stroke="#ececec" stroke-width="0.95"/></svg>
<div style="left:494.2px;top:384px;width:1.1px;height:180px;background:#e02a2a;"></div>
<svg style="left:488.8px;top:374.5px" width="12" height="11"><path d="M2.2,0.5 H9.8 Q11,0.5 11,1.8 V4 L7.6,9.8 H4.4 L1,4 V1.8 Q1,0.5 2.2,0.5Z" fill="#e3b81e" stroke="#7a5c08" stroke-width="0.8"/><path d="M3.8,2.3 H8.2 L6.8,7.5 H5.2Z" fill="#f6de6a" opacity="0.6"/></svg>
<div style="left:788px;top:360px;width:12.7px;height:216px;background:#5c5c5c;"></div>
<div style="left:787.7px;top:360px;width:0.8px;height:204px;background:#333;"></div>
<svg style="left:789px;top:387.5px" width="12" height="12"><path d="M1,0.5 H10.5 V6 L5.7,11 L1,6Z" fill="#727272" stroke="#aeaeae" stroke-width="0.9"/></svg>
<div style="left:788.5px;top:400.5px;width:12.5px;height:13px;background:#5a5a5a;"></div>
<svg style="left:789.5px;top:402px" width="11" height="10"><path d="M1,9 A4.5,4.5 0 0 1 10,9" fill="none" stroke="#d8d8d8" stroke-width="1.3"/><path d="M3.5,9 A2,2 0 0 1 7.5,9Z" fill="#d8d8d8"/><rect x="0.5" y="8" width="10" height="1.5" fill="#bbb"/></svg>
<div style="left:788.5px;top:414.5px;width:12.5px;height:14.5px;background:linear-gradient(#606060,#525252);border:1px solid #444;box-sizing:border-box;"></div>
<svg style="left:791px;top:418.5px" width="8" height="6"><path d="M0.3,5 L6.7,5 L3.5,0.6Z" fill="#eaeaea"/></svg>
<div style="left:788.5px;top:429px;width:12.5px;height:120.5px;background:#4e4e4e;"></div>
<div style="left:788.8px;top:429px;width:12px;height:107px;background:linear-gradient(90deg,#686868,#5e5e5e);border:1px solid #474747;box-sizing:border-box;"></div>
<div style="left:788.5px;top:549.5px;width:12.5px;height:14.5px;background:linear-gradient(#606060,#525252);border:1px solid #444;box-sizing:border-box;"></div>
<svg style="left:791px;top:554px" width="8" height="6"><path d="M0.3,0.6 L6.7,0.6 L3.5,5Z" fill="#eaeaea"/></svg>
<div style="left:1.3px;top:563.7px;width:800px;height:12px;background:#535353;border-top:1px solid #3a3a3a;box-sizing:border-box;"></div>
<div style="left:170px;top:565.5px;width:98.7px;height:9.7px;background:linear-gradient(#5a5a5a,#4e4e4e);border:1px solid #6e6e6e;border-radius:1px;box-sizing:border-box;box-shadow:0 0.8px 0 #5c5c5c;"></div>
<span style="left:177.5px;top:564.50px;line-height:12px;font-family:'Liberation Sans',sans-serif;font-size:8px;color:#e8e8e8;letter-spacing:-0.217px;">Toggle Switches / Modes</span>
<svg style="left:4px;top:565px" width="44" height="11"><rect x="0.5" y="0.5" width="11" height="10" rx="1.5" fill="#333" stroke="#777"/><path d="M2.5,3 H6 V8 H2.5Z M6,4 H9.5 V8.5 H5" fill="#bbb" stroke="#ddd" stroke-width="0.7"/><circle cx="22" cy="5.5" r="4" fill="none" stroke="#aaa"/><rect x="21.5" y="4.5" width="5" height="5" fill="#bbb" stroke="#444" stroke-width="0.6"/><path d="M32.5,1.5 q-1.5,2 0,4 q1.5,2 0,4 M35.5,1.5 q1.5,2 0,4 q-1.5,2 0,4 M30.5,5.5 h7" stroke="#cfcfcf" fill="none" stroke-width="1"/></svg>
<svg style="left:92.5px;top:543px" width="10" height="10"><circle cx="5" cy="5" r="3.2" fill="none" stroke="#c4c4c4" stroke-width="1"/><path d="M5,1.8 V0.3 M3.2,0.8 h3.6" stroke="#c4c4c4" stroke-width="0.9"/></svg>
<span style="left:105.5px;top:541.50px;line-height:12px;font-family:'Liberation Sans',sans-serif;font-size:8.8px;color:#d0d0d0;letter-spacing:-0.220px;transform:scaleX(0.885);transform-origin:0 50%;">Scale</span>
<svg style="left:91.5px;top:555px" width="11" height="11"><rect x="0.5" y="0.5" width="10" height="10" rx="1.5" fill="#2f2f2f" stroke="#888"/><circle cx="5.5" cy="6" r="2.6" fill="none" stroke="#e4e4e4"/><path d="M5.5,6 L7.3,4 M3.5,2.5 h4" stroke="#e4e4e4" stroke-width="0.9"/></svg>
<svg style="left:106px;top:555.5px" width="11" height="10"><path d="M1.5,1 V8.5 H10 M1.5,2 Q3,8 9.5,8" fill="none" stroke="#cdcdcd" stroke-width="1"/></svg>
<span style="left:119.5px;top:554.20px;line-height:12px;font-family:'Liberation Sans',sans-serif;font-size:8.8px;color:#dedede;letter-spacing:-0.220px;transform:scaleX(0.984);transform-origin:0 50%;">Rotation</span>
<svg style="left:8px;top:555.5px" width="26" height="10"><path d="M0.5,4.7 L4,1 V8.5Z" fill="#d4d4d4"/><path d="M12,1.5 L15.3,4.8 L12,8 L8.7,4.8Z" fill="#6a6a6a"/><path d="M24.5,4.7 L21,1 V8.5Z" fill="#d4d4d4"/></svg>
<svg style="left:170px;top:543.5px" width="12" height="9"><rect x="0.5" y="0.5" width="4.5" height="4" rx="1.5" fill="none" stroke="#ccc"/><rect x="5" y="0.5" width="4.5" height="4" rx="1.5" fill="none" stroke="#ccc"/><path d="M0,7 h10.5" stroke="#ccc"/></svg>
<span style="left:184px;top:541.50px;line-height:12px;font-family:'Liberation Sans',sans-serif;font-size:8.8px;color:#a2812c;letter-spacing:0.019px;text-decoration:underline;text-decoration-color:#7d6424;">100.0, 100.0%</span>
<span style="left:171px;top:554.30px;line-height:12px;font-family:'Liberation Sans',sans-serif;font-size:8.8px;color:#9a7a2a;letter-spacing:0.103px;">0 x +84.0°</span>
<svg style="left:374.5px;top:567px" width="10" height="7"><path d="M0.5,6 L3,2.5 L5,4.5 L6.5,3 L9,6Z" fill="#aaa"/></svg>
<div style="left:394px;top:569.7px;width:31.5px;height:1.8px;background:#2c2c2c;"></div>
<div style="left:400.5px;top:566.5px;width:5px;height:8px;background:linear-gradient(#bdbdbd,#8a8a8a);border:1px solid #3a3a3a;border-radius:2px;box-sizing:border-box;"></div>
<svg style="left:434px;top:565.5px" width="15" height="9"><path d="M0.5,8 L4,2.5 L6,5 L8.5,0.8 L11,5 L12.3,3.2 L14.5,8Z" fill="#c4c4c4"/></svg>
<div style="left:451.5px;top:564.7px;width:14px;height:11px;background:linear-gradient(#5c5c5c,#4c4c4c);border:1px solid #333;box-sizing:border-box;"></div>
<svg style="left:455px;top:566px" width="7" height="9"><path d="M5.5,0.5 V8 L0.8,4.3Z" fill="#eaeaea"/></svg>
<div style="left:465.5px;top:564.7px;width:310px;height:11px;background:#505050;border-top:1px solid #383838;box-sizing:border-box;"></div>
<div style="left:467.5px;top:565.2px;width:220px;height:10.3px;background:linear-gradient(#636363,#575757);border:1px solid #353535;box-sizing:border-box;"></div>
<div style="left:775.5px;top:564.7px;width:13px;height:11px;background:linear-gradient(#5c5c5c,#4c4c4c);border:1px solid #333;box-sizing:border-box;"></div>
<svg style="left:779px;top:566px" width="7" height="9"><path d="M1,0.5 V8 L5.8,4.3Z" fill="#eaeaea"/></svg>
<div style="left:802.5px;top:55px;width:2.5px;height:522px;background:#2f2f2f;"></div>
<div style="left:957.5px;top:55px;width:6.5px;height:522px;background:#303030;"></div>
<div style="left:805px;top:55.3px;width:152.5px;height:144.7px;background:#585858;"></div>
<div style="left:805px;top:55.3px;width:152.5px;height:14.3px;background:linear-gradient(#424242,#3e3e3e);"></div>
<div style="left:805px;top:55.599999999999994px;width:34.5px;height:14.2px;background:linear-gradient(#494949,#434343);"></div>
<span style="left:811.5px;top:56.90px;line-height:12px;font-family:'Liberation Sans',sans-serif;font-size:8.8px;color:#bdbdbd;letter-spacing:0.328px;">Info</span>
<div style="left:839.5px;top:55.599999999999994px;width:40px;height:14.2px;background:linear-gradient(#5e5e5e,#595959);border-radius:2px 2px 0 0;"></div>
<svg style="left:841.5px;top:58.3px" width="5" height="9"><path d="M1,0.5 V8.5 M3,0.5 V8.5" stroke="#757575" stroke-width="0.9" stroke-dasharray="1,1.4"/></svg>
<span style="left:847px;top:56.90px;line-height:12px;font-family:'Liberation Sans',sans-serif;font-size:8.8px;color:#efefef;letter-spacing:-0.220px;transform:scaleX(0.935);transform-origin:0 50%;">Audio</span>
<span style="left:872.5px;top:57.10px;line-height:12px;font-family:'Liberation Sans',sans-serif;font-size:7.5px;color:#858585;">×</span>
<svg style="left:931.5px;top:58.599999999999994px" width="12" height="9"><path d="M0,1.5 L3.6,1.5 L1.8,3.6Z" fill="#b8b8b8"/><path d="M4.5,1.5 H11 M4.5,4 H11 M4.5,6.5 H11" stroke="#b4b4b4" stroke-width="1.05"/></svg>
<svg style="left:947.5px;top:57.599999999999994px" width="6" height="12"><path d="M1,1 V11 M3.5,1 V11" stroke="#6a6a6a" stroke-width="1" stroke-dasharray="1.3,1.3"/></svg>
<div style="left:805px;top:200.0px;width:152.5px;height:0.8px;background:#3e3e3e;"></div>
<div style="left:811.7px;top:76px;width:19.6px;height:2.6px;background:#000;"></div>
<div style="left:811.7px;top:80.8px;width:19.6px;height:114.2px;background:linear-gradient(#9a2c1c 0%,#97401e 6%,#8a6a20 13%,#6f8422 20%,#3f8a26 28%,#278428 36%,#1f7424 50%,#185c1c 70%,#124414 88%,#103a12 100%);"></div>
<div style="left:821px;top:80.8px;width:1px;height:114.2px;background:#0a0a0a;"></div>
<div style="left:811.2px;top:80.8px;width:0.6px;height:114.2px;background:#3a3a3a;"></div>
<span style="left:839.5px;top:78.60px;line-height:12px;font-family:'Liberation Sans',sans-serif;font-size:7.6px;color:#e2e2e2;letter-spacing:-0.220px;transform:scaleX(0.889);transform-origin:0 50%;">0.0</span>
<span style="left:838px;top:92.05px;line-height:12px;font-family:'Liberation Sans',sans-serif;font-size:7.6px;color:#e2e2e2;letter-spacing:-0.220px;transform:scaleX(0.942);transform-origin:0 50%;">-3.0</span>
<span style="left:838px;top:105.50px;line-height:12px;font-family:'Liberation Sans',sans-serif;font-size:7.6px;color:#e2e2e2;letter-spacing:-0.220px;transform:scaleX(0.942);transform-origin:0 50%;">-6.0</span>
<span style="left:838px;top:118.95px;line-height:12px;font-family:'Liberation Sans',sans-serif;font-size:7.6px;color:#e2e2e2;letter-spacing:-0.220px;transform:scaleX(0.942);transform-origin:0 50%;">-9.0</span>
<span style="left:837.5px;top:132.40px;line-height:12px;font-family:'Liberation Sans',sans-serif;font-size:7.6px;color:#e2e2e2;letter-spacing:-0.220px;transform:scaleX(0.975);transform-origin:0 50%;">-12.0</span>
<span style="left:837.5px;top:145.85px;line-height:12px;font-family:'Liberation Sans',sans-serif;font-size:7.6px;color:#e2e2e2;letter-spacing:-0.220px;transform:scaleX(0.975);transform-origin:0 50%;">-15.0</span>
<span style="left:837.5px;top:159.30px;line-height:12px;font-family:'Liberation Sans',sans-serif;font-size:7.6px;color:#e2e2e2;letter-spacing:-0.220px;transform:scaleX(0.975);transform-origin:0 50%;">-18.0</span>
<span style="left:837.5px;top:172.75px;line-height:12px;font-family:'Liberation Sans',sans-serif;font-size:7.6px;color:#e2e2e2;letter-spacing:-0.220px;transform:scaleX(0.975);transform-origin:0 50%;">-21.0</span>
<span style="left:837.5px;top:184.30px;line-height:12px;font-family:'Liberation Sans',sans-serif;font-size:7.6px;color:#e2e2e2;letter-spacing:-0.220px;transform:scaleX(0.975);transform-origin:0 50%;">-24.0</span>
<div style="left:874.5px;top:86px;width:1.6px;height:96px;background:#4f4f4f;"></div>
<div style="left:876.1999999999999px;top:86px;width:0.6px;height:96px;background:#5f5f5f;"></div>
<div style="left:890.5px;top:86px;width:1.6px;height:96px;background:#4f4f4f;"></div>
<div style="left:892.1999999999999px;top:86px;width:0.6px;height:96px;background:#5f5f5f;"></div>
<div style="left:907.2px;top:86px;width:1.6px;height:96px;background:#4f4f4f;"></div>
<div style="left:908.9px;top:86px;width:0.6px;height:96px;background:#5f5f5f;"></div>
<div style="left:871.3px;top:98px;width:8px;height:6.5px;background:linear-gradient(#626262,#545454);border-radius:3px;border:0.6px solid #4d4d4d;box-sizing:border-box;"></div>
<div style="left:884.8px;top:98px;width:13px;height:6.5px;background:linear-gradient(#626262,#545454);border-radius:3px;border:0.6px solid #4d4d4d;box-sizing:border-box;"></div>
<div style="left:903.0px;top:98px;width:10px;height:6.5px;background:linear-gradient(#626262,#545454);border-radius:3px;border:0.6px solid #4d4d4d;box-sizing:border-box;"></div>
<span style="left:921px;top:77.70px;line-height:12px;font-family:'Liberation Sans',sans-serif;font-size:7.6px;color:#e2e2e2;letter-spacing:-0.220px;transform:scaleX(0.974);transform-origin:0 50%;">12.0 dB</span>
<span style="left:921px;top:95.00px;line-height:12px;font-family:'Liberation Sans',sans-serif;font-size:7.6px;color:#e2e2e2;letter-spacing:-0.161px;">0.0 dB</span>
<span style="left:918.5px;top:116.00px;line-height:12px;font-family:'Liberation Sans',sans-serif;font-size:7.6px;color:#e2e2e2;letter-spacing:-0.163px;">-12.0</span>
<span style="left:918.5px;top:135.30px;line-height:12px;font-family:'Liberation Sans',sans-serif;font-size:7.6px;color:#e2e2e2;letter-spacing:-0.163px;">-24.0</span>
<span style="left:918.5px;top:155.00px;line-height:12px;font-family:'Liberation Sans',sans-serif;font-size:7.6px;color:#e2e2e2;letter-spacing:-0.163px;">-36.0</span>
<span style="left:918.5px;top:173.20px;line-height:12px;font-family:'Liberation Sans',sans-serif;font-size:7.6px;color:#e2e2e2;letter-spacing:-0.152px;">-48.0 dB</span>
<span style="left:873.5px;top:184.30px;line-height:12px;font-family:'Liberation Sans',sans-serif;font-size:7.6px;color:#7a7a7a;">0</span>
<span style="left:907.5px;top:184.30px;line-height:12px;font-family:'Liberation Sans',sans-serif;font-size:7.6px;color:#7a7a7a;">0</span>
<div style="left:805px;top:203.3px;width:152.5px;height:34.7px;background:#585858;"></div>
<div style="left:805px;top:203.3px;width:152.5px;height:14.3px;background:linear-gradient(#424242,#3e3e3e);"></div>
<div style="left:805px;top:203.60000000000002px;width:47.5px;height:14.2px;background:linear-gradient(#5e5e5e,#595959);border-radius:2px 2px 0 0;"></div>
<svg style="left:807px;top:206.3px" width="5" height="9"><path d="M1,0.5 V8.5 M3,0.5 V8.5" stroke="#757575" stroke-width="0.9" stroke-dasharray="1,1.4"/></svg>
<span style="left:812.3px;top:204.90px;line-height:12px;font-family:'Liberation Sans',sans-serif;font-size:8.8px;color:#efefef;letter-spacing:-0.220px;transform:scaleX(0.948);transform-origin:0 50%;">Preview</span>
<span style="left:844.0px;top:205.10px;line-height:12px;font-family:'Liberation Sans',sans-serif;font-size:7.5px;color:#858585;">×</span>
<svg style="left:931.5px;top:206.60000000000002px" width="12" height="9"><path d="M0,1.5 L3.6,1.5 L1.8,3.6Z" fill="#b8b8b8"/><path d="M4.5,1.5 H11 M4.5,4 H11 M4.5,6.5 H11" stroke="#b4b4b4" stroke-width="1.05"/></svg>
<svg style="left:947.5px;top:205.60000000000002px" width="6" height="12"><path d="M1,1 V11 M3.5,1 V11" stroke="#6a6a6a" stroke-width="1" stroke-dasharray="1.3,1.3"/></svg>
<div style="left:805px;top:238.0px;width:152.5px;height:0.8px;background:#3e3e3e;"></div>
<svg style="left:812px;top:222.5px" width="146" height="12" fill="#d6d6d6">
<path d="M1.5,1.5 h1.6 v8 h-1.6z M9,1.5 v8 l-5.5,-4z"/>
<path d="M24,1.5 v8 l-5.5,-4z M25.2,1.5 h1.6 v8 h-1.6z"/>
<path d="M38,1 v9 l7,-4.5z"/>
<path d="M55.5,1.5 h1.6 v8 h-1.6z M58.2,1.5 v8 l5.5,-4z"/>
<path d="M73.5,1.5 v8 l5.5,-4z M79.3,1.5 h1.6 v8 h-1.6z"/>
<path d="M94,4 h2.5 l3.5,-3 v9.5 l-3.5,-3 h-2.5z"/><path d="M101.5,3 q2,2.5 0,5 M103,1.5 q3,4 0,8" fill="none" stroke="#d6d6d6" stroke-width="0.9"/>
<path d="M114,4.5 h8 v-2.5 l3.5,3.3 l-3.5,3.3 v-2.2 h-6 v2.5 h8.5 v2 h-10.5z" stroke="none"/>
<path d="M134,1.5 h1.3 v8 h-1.3z M136.3,1.5 h1.3 v8 h-1.3z M138.5,1.5 v8 l5.5,-4z"/>
</svg>
<div style="left:805px;top:242px;width:152.5px;height:98.5px;background:#585858;"></div>
<div style="left:805px;top:242px;width:152.5px;height:14.3px;background:linear-gradient(#424242,#3e3e3e);"></div>
<div style="left:805px;top:242.3px;width:54px;height:14.2px;background:linear-gradient(#5e5e5e,#595959);border-radius:2px 2px 0 0;"></div>
<svg style="left:807px;top:245px" width="5" height="9"><path d="M1,0.5 V8.5 M3,0.5 V8.5" stroke="#757575" stroke-width="0.9" stroke-dasharray="1,1.4"/></svg>
<span style="left:812.5px;top:243.60px;line-height:12px;font-family:'Liberation Sans',sans-serif;font-size:8.8px;color:#efefef;letter-spacing:-0.220px;transform:scaleX(0.969);transform-origin:0 50%;">Character</span>
<span style="left:851.5px;top:243.80px;line-height:12px;font-family:'Liberation Sans',sans-serif;font-size:7.5px;color:#858585;">×</span>
<svg style="left:931.5px;top:245.3px" width="12" height="9"><path d="M0,1.5 L3.6,1.5 L1.8,3.6Z" fill="#b8b8b8"/><path d="M4.5,1.5 H11 M4.5,4 H11 M4.5,6.5 H11" stroke="#b4b4b4" stroke-width="1.05"/></svg>
<svg style="left:947.5px;top:244.3px" width="6" height="12"><path d="M1,1 V11 M3.5,1 V11" stroke="#6a6a6a" stroke-width="1" stroke-dasharray="1.3,1.3"/></svg>
<div style="left:805px;top:340.5px;width:152.5px;height:0.8px;background:#3e3e3e;"></div>
<div style="left:809.5px;top:265.2px;width:90.5px;height:11.2px;background:linear-gradient(#a2a2a2,#b0b0b0);border:1px solid #303030;box-sizing:border-box;"></div>
<div style="left:885.5px;top:266.2px;width:13.5px;height:9.2px;background:linear-gradient(#6a6a6a,#565656);border-left:1px solid #404040;box-sizing:border-box;"></div>
<span style="left:812px;top:265.00px;line-height:12px;font-family:'Liberation Sans',sans-serif;font-size:8.6px;color:#141414;letter-spacing:-0.220px;transform:scaleX(0.943);transform-origin:0 50%;">Times New Roman</span>
<svg style="left:888.5px;top:268.5px" width="8" height="6"><path d="M0.3,0.5 L6.7,0.5 L3.5,4.6Z" fill="#e6e6e6"/></svg>
<div style="left:809.5px;top:283px;width:90.5px;height:11.5px;background:linear-gradient(#a2a2a2,#b0b0b0);border:1px solid #303030;box-sizing:border-box;"></div>
<div style="left:885.5px;top:284px;width:13.5px;height:9.5px;background:linear-gradient(#6a6a6a,#565656);border-left:1px solid #404040;box-sizing:border-box;"></div>
<span style="left:811.5px;top:283.30px;line-height:12px;font-family:'Liberation Sans',sans-serif;font-size:8.6px;color:#141414;letter-spacing:-0.220px;transform:scaleX(0.980);transform-origin:0 50%;">Regular</span>
<svg style="left:888.5px;top:286.5px" width="8" height="6"><path d="M0.3,0.5 L6.7,0.5 L3.5,4.6Z" fill="#e6e6e6"/></svg>
<svg style="left:905px;top:264.5px" width="13" height="13"><path d="M1,12 L2,9 L7,4 L9,6 L4,11Z" fill="#9a9a9a" stroke="#2a2a2a" stroke-width="0.7"/><path d="M6.5,3 L10,6.5 M8,4.5 L10,2 Q11.5,0.8 12,2 Q12.5,3 11,4.2 L9,6" stroke="#1a1a1a" stroke-width="1.6" fill="#1a1a1a"/></svg>
<div style="left:932.3px;top:273.5px;width:22px;height:21.5px;background:#f8f8f8;border:1px solid #2a2a2a;box-sizing:border-box;"></div>
<div style="left:938.3px;top:278.5px;width:9.7px;height:10px;background:#585858;border:1px solid #2a2a2a;box-sizing:border-box;"></div>
<svg style="left:932.3px;top:273.7px" width="22" height="22"><path d="M1,21 L21,1" stroke="#c41c30" stroke-width="1.6"/></svg>
<div style="left:923px;top:263.3px;width:22px;height:21.7px;background:#ebebeb;border:1px solid #333;box-sizing:border-box;box-shadow:0.5px 0.5px 0 #222;"></div>
<svg style="left:946.5px;top:263.5px" width="9" height="9"><path d="M1,2 Q6.5,1.5 7,7" fill="none" stroke="#cfcfcf" stroke-width="1.2"/><path d="M0.2,2 l2.8,-2 v4z M7,8.8 l-2,-2.8 h4z" fill="#cfcfcf"/></svg>
<div style="left:904px;top:283px;width:14.2px;height:5.8px;background:#000;"></div>
<div style="left:904px;top:288.8px;width:14.2px;height:5.7px;background:#fff;"></div>
<div style="left:922px;top:288px;width:8px;height:7px;background:#f0f0f0;"></div>
<svg style="left:922px;top:288px" width="8" height="7"><path d="M0.5,6.5 L7.5,0.5" stroke="#d02028" stroke-width="1.4"/></svg>
<div style="left:808px;top:300.3px;width:147px;height:0.8px;background:#4a4a4a;"></div>
<svg style="left:809px;top:303px" width="13" height="12"><path d="M3.5,1.5 H12 M3.5,1.5 V3 M12,1.5 V3 M7.7,1.5 V10.5 M6,10.5 h3.5" fill="none" stroke="#e8e8e8" stroke-width="1.3"/><path d="M0.3,5 H5.3 M2.8,5 V10.5 M1.6,10.5 h2.4" fill="none" stroke="#e0e0e0" stroke-width="1"/></svg>
<span style="left:826.5px;top:303.30px;line-height:12px;font-family:'Liberation Sans',sans-serif;font-size:8.6px;color:#c49a28;letter-spacing:-0.031px;text-decoration:underline;text-decoration-color:#9b7a22;">36</span>
<span style="left:838px;top:303.30px;line-height:12px;font-family:'Liberation Sans',sans-serif;font-size:8.6px;color:#ececec;letter-spacing:-0.220px;transform:scaleX(0.984);transform-origin:0 50%;">px</span>
<svg style="left:860.3px;top:307.1px" width="7" height="6"><path d="M0.3,0.4 L5.7,0.4 L3,4.4Z" fill="#e6e6e6"/></svg>
<svg style="left:889px;top:304px" width="10" height="13"><path d="M2,5.3 L4.5,0.5 L7,5.3 M3,3.8 h3" fill="none" stroke="#e4e4e4" stroke-width="1"/><path d="M1,11.8 V7.3 M0,7.3 h2 M0,11.8 h2 M4,11.8 L6,7.3 L8.5,11.8 M4.8,10.3 h3" fill="none" stroke="#e4e4e4" stroke-width="1"/></svg>
<span style="left:911px;top:303.00px;line-height:12px;font-family:'Liberation Sans',sans-serif;font-size:8.6px;color:#c49a28;letter-spacing:-0.172px;text-decoration:underline;text-decoration-color:#9b7a22;">Auto</span>
<svg style="left:945px;top:307.1px" width="7" height="6"><path d="M0.3,0.4 L5.7,0.4 L3,4.4Z" fill="#e6e6e6"/></svg>
<svg style="left:808.5px;top:318.5px" width="13" height="13"><path d="M0.5,8.5 L3,3 L5.5,8.5 M1.4,6.8 h3.2 M5.8,3 L8,8.5 L10.2,3 M4,1 h4" fill="none" stroke="#e4e4e4" stroke-width="1"/><path d="M3,11.5 h6 M7.8,10.2 l1.8,1.3 l-1.8,1.3z" stroke="#e4e4e4" fill="#e4e4e4" stroke-width="0.8"/></svg>
<span style="left:827px;top:318.80px;line-height:12px;font-family:'Liberation Sans',sans-serif;font-size:8.6px;color:#808080;letter-spacing:-0.220px;transform:scaleX(0.956);transform-origin:0 50%;">Metrics</span>
<svg style="left:860.3px;top:322.6px" width="7" height="6"><path d="M0.3,0.4 L5.7,0.4 L3,4.4Z" fill="#e6e6e6"/></svg>
<svg style="left:889px;top:319px" width="13" height="13"><rect x="0.5" y="0.5" width="11" height="7" fill="#6e6e6e"/><path d="M1,6.5 L3,1.5 L5,6.5 M1.8,5 h2.4 M6,1.5 L8,6.5 L10,1.5" fill="none" stroke="#f0f0f0" stroke-width="1"/><path d="M2,10.5 h8 M2.5,9 l-2,1.5 l2,1.5z M9.5,9 l2,1.5 l-2,1.5z" stroke="#e4e4e4" fill="#e4e4e4" stroke-width="0.8"/></svg>
<span style="left:911.5px;top:318.80px;line-height:12px;font-family:'Liberation Sans',sans-serif;font-size:8.6px;color:#c49a28;text-decoration:underline;text-decoration-color:#9b7a22;">0</span>
<svg style="left:945px;top:322.6px" width="7" height="6"><path d="M0.3,0.4 L5.7,0.4 L3,4.4Z" fill="#e6e6e6"/></svg>
<div style="left:805px;top:345px;width:152.5px;height:232px;background:#585858;"></div>
<div style="left:805px;top:345px;width:152.5px;height:14.3px;background:linear-gradient(#424242,#3e3e3e);"></div>
<div style="left:805px;top:345.3px;width:56.5px;height:14.2px;background:linear-gradient(#5e5e5e,#595959);border-radius:2px 2px 0 0;"></div>
<svg style="left:807px;top:348px" width="5" height="9"><path d="M1,0.5 V8.5 M3,0.5 V8.5" stroke="#757575" stroke-width="0.9" stroke-dasharray="1,1.4"/></svg>
<span style="left:812.5px;top:346.60px;line-height:12px;font-family:'Liberation Sans',sans-serif;font-size:8.8px;color:#efefef;letter-spacing:-0.220px;transform:scaleX(0.959);transform-origin:0 50%;">Paragraph</span>
<span style="left:853.5px;top:346.80px;line-height:12px;font-family:'Liberation Sans',sans-serif;font-size:7.5px;color:#858585;">×</span>
<svg style="left:931.5px;top:348.3px" width="12" height="9"><path d="M0,1.5 L3.6,1.5 L1.8,3.6Z" fill="#b8b8b8"/><path d="M4.5,1.5 H11 M4.5,4 H11 M4.5,6.5 H11" stroke="#b4b4b4" stroke-width="1.05"/></svg>
<svg style="left:947.5px;top:347.3px" width="6" height="12"><path d="M1,1 V11 M3.5,1 V11" stroke="#6a6a6a" stroke-width="1" stroke-dasharray="1.3,1.3"/></svg>
<div style="left:805px;top:577px;width:152.5px;height:0.8px;background:#3e3e3e;"></div>
<div style="left:809.8px;top:363.8px;width:15.2px;height:15.4px;background:#3a3a3a;border:1px solid #2a2a2a;box-sizing:border-box;border-radius:1.5px;"></div>
<svg style="left:805px;top:362px" width="150" height="20" fill="#cdcdcd"><rect x="6.9" y="5.00" width="11" height="1.25"/><rect x="6.9" y="8.05" width="8" height="1.25"/><rect x="6.9" y="11.10" width="11" height="1.25"/><rect x="6.9" y="14.15" width="7" height="1.25"/><rect x="27.5" y="5.00" width="7" height="1.25"/><rect x="25.5" y="8.05" width="11" height="1.25"/><rect x="25.5" y="11.10" width="11" height="1.25"/><rect x="27.5" y="14.15" width="7" height="1.25"/><rect x="47.5" y="5.00" width="8" height="1.25"/><rect x="44.5" y="8.05" width="11" height="1.25"/><rect x="44.5" y="11.10" width="11" height="1.25"/><rect x="47.5" y="14.15" width="8" height="1.25"/><rect x="66.5" y="5.00" width="11" height="1.25"/><rect x="66.5" y="8.05" width="11" height="1.25"/><rect x="66.5" y="11.10" width="11" height="1.25"/><rect x="66.5" y="14.15" width="6" height="1.25"/><rect x="85.5" y="5.00" width="11" height="1.25"/><rect x="85.5" y="8.05" width="11" height="1.25"/><rect x="85.5" y="11.10" width="11" height="1.25"/><rect x="88.0" y="14.15" width="6" height="1.25"/><rect x="104.5" y="5.00" width="11" height="1.25"/><rect x="104.5" y="8.05" width="11" height="1.25"/><rect x="104.5" y="11.10" width="11" height="1.25"/><rect x="109.5" y="14.15" width="6" height="1.25"/><rect x="126.5" y="5.00" width="11" height="1.25"/><rect x="126.5" y="8.05" width="11" height="1.25"/><rect x="126.5" y="11.10" width="11" height="1.25"/><rect x="126.5" y="14.15" width="11" height="1.25"/></svg>
<div style="left:808px;top:383.3px;width:147px;height:0.9px;background:#4a4a4a;"></div>
<svg style="left:810.5px;top:387.5px" width="15" height="10" fill="#dedede"><path d="M0,4 h2 v-1.5 l2.5,2 l-2.5,2 v-1.5 h-2z"/><rect x="5" y="1.5" width="7" height="1"/><rect x="5" y="4" width="7" height="1"/><rect x="5" y="6.5" width="7" height="1"/></svg>
<span style="left:826.5px;top:386.30px;line-height:12px;font-family:'Liberation Sans',sans-serif;font-size:8.6px;color:#c49a28;text-decoration:underline;text-decoration-color:#9b7a22;">0</span>
<span style="left:832.0px;top:386.30px;line-height:12px;font-family:'Liberation Sans',sans-serif;font-size:8.6px;color:#ececec;letter-spacing:-0.220px;transform:scaleX(0.984);transform-origin:0 50%;">px</span>
<svg style="left:862px;top:387.5px" width="15" height="10" fill="#dedede"><path d="M0,1 h3.5 l-1.7,2z"/><rect x="4.5" y="1" width="8" height="1"/><rect x="6" y="4" width="8" height="1"/><rect x="6" y="6.5" width="8" height="1"/><rect x="6" y="9" width="8" height="1"/></svg>
<span style="left:880.5px;top:386.30px;line-height:12px;font-family:'Liberation Sans',sans-serif;font-size:8.6px;color:#c49a28;text-decoration:underline;text-decoration-color:#9b7a22;">0</span>
<span style="left:886.0px;top:386.30px;line-height:12px;font-family:'Liberation Sans',sans-serif;font-size:8.6px;color:#ececec;letter-spacing:-0.220px;transform:scaleX(0.984);transform-origin:0 50%;">px</span>
<svg style="left:912px;top:387px" width="15" height="10" fill="#dedede"><path d="M0,1 h3.5 l-1.7,2z"/><rect x="5" y="1" width="9" height="1"/><rect x="5" y="3.7" width="9" height="1"/><rect x="7" y="6.4" width="7" height="1"/></svg>
<span style="left:929.5px;top:386.30px;line-height:12px;font-family:'Liberation Sans',sans-serif;font-size:8.6px;color:#c49a28;text-decoration:underline;text-decoration-color:#9b7a22;">0</span>
<span style="left:935.0px;top:386.30px;line-height:12px;font-family:'Liberation Sans',sans-serif;font-size:8.6px;color:#ececec;letter-spacing:-0.220px;transform:scaleX(0.984);transform-origin:0 50%;">px</span>
<svg style="left:809px;top:400.5px" width="15" height="10" fill="#dedede"><rect x="0" y="1.5" width="8" height="1"/><rect x="0" y="4" width="8" height="1"/><rect x="0" y="6.5" width="8" height="1"/><path d="M13,4 h-2 v-1.5 l-2.5,2 l2.5,2 v-1.5 h2z"/></svg>
<span style="left:826.5px;top:399.30px;line-height:12px;font-family:'Liberation Sans',sans-serif;font-size:8.6px;color:#c49a28;text-decoration:underline;text-decoration-color:#9b7a22;">0</span>
<span style="left:832.0px;top:399.30px;line-height:12px;font-family:'Liberation Sans',sans-serif;font-size:8.6px;color:#ececec;letter-spacing:-0.220px;transform:scaleX(0.984);transform-origin:0 50%;">px</span>
<svg style="left:862px;top:400.5px" width="15" height="10" fill="#dedede"><rect x="5" y="0.5" width="8" height="1"/><rect x="5" y="3" width="8" height="1"/><rect x="3.5" y="5.5" width="10" height="1"/><path d="M0,9.5 h3.5 l-1.7,-2z"/><rect x="4.5" y="8.5" width="9" height="1"/></svg>
<span style="left:880.5px;top:399.50px;line-height:12px;font-family:'Liberation Sans',sans-serif;font-size:8.6px;color:#c49a28;text-decoration:underline;text-decoration-color:#9b7a22;">0</span>
<span style="left:886.0px;top:399.50px;line-height:12px;font-family:'Liberation Sans',sans-serif;font-size:8.6px;color:#ececec;letter-spacing:-0.220px;transform:scaleX(0.984);transform-origin:0 50%;">px</span>
<div style="left:-4px;top:-4px;width:968px;height:23.2px;background:linear-gradient(#2f7df0 0px,#2f7df0 4px,#1566ea 5.5px,#0558e2 7.8px,#0353dd 14.6px,#0450d6 19.4px,#0a5be8 21.7px,#0648cf 23.2px);"></div>
<div style="left:3px;top:3.8px;width:10px;height:10.7px;background:linear-gradient(#b4b4b4,#808080);border:0.8px solid #5a5a62;box-sizing:border-box;"></div>
<span style="left:4.6px;top:3.20px;line-height:12px;font-family:'Liberation Sans',sans-serif;font-size:6.5px;color:#222;font-weight:bold;letter-spacing:-0.220px;transform:scaleX(0.889);transform-origin:0 50%;">Ae</span>
<span style="left:16.5px;top:3.70px;line-height:12px;font-family:'Liberation Serif',serif;font-size:10.5px;color:#fff;font-weight:bold;letter-spacing:-0.164px;text-shadow:0.7px 0.7px 0 #0a2a80;">Adobe After Effects - 01-01.aep</span>
<div style="left:908.3px;top:1.5px;width:15.3px;height:15.5px;background:linear-gradient(135deg,#4a7cf0,#2a56d8 45%,#1e48c8);border:1px solid #dfe8ff;border-radius:2.5px;box-sizing:border-box;"></div>
<div style="left:925.5px;top:1.5px;width:15.3px;height:15.5px;background:linear-gradient(135deg,#4a7cf0,#2a56d8 45%,#1e48c8);border:1px solid #dfe8ff;border-radius:2.5px;box-sizing:border-box;"></div>
<div style="left:943px;top:1.5px;width:15.3px;height:15.5px;background:linear-gradient(135deg,#e8825a,#d64a22 45%,#c43a18);border:1px solid #f6dcd0;border-radius:2.5px;box-sizing:border-box;"></div>
<div style="left:912.3px;top:11px;width:5.5px;height:2.2px;background:#fff;"></div>
<svg style="left:928.5px;top:4px" width="10" height="10"><rect x="3" y="1.2" width="5.2" height="4.5" fill="none" stroke="#fff" stroke-width="1.1"/><rect x="0.8" y="4" width="5.2" height="4.3" fill="#2a56d8" stroke="#fff" stroke-width="1.1"/></svg>
<svg style="left:946px;top:4.5px" width="10" height="10"><path d="M1.2,1.2 L8.2,8.2 M8.2,1.2 L1.2,8.2" stroke="#fff" stroke-width="1.7"/></svg>
<div style="left:-4px;top:19.2px;width:968px;height:15.5px;background:#ece9d8;"></div>
<div style="left:-4px;top:19px;width:968px;height:0.9px;background:#f6f6f0;"></div>
<div style="left:2.5px;top:20.3px;width:19px;height:14.2px;background:#fbfbf8;"></div>
<span style="left:5px;top:20.70px;line-height:12px;font-family:'Liberation Serif',serif;font-size:8.9px;color:#000;letter-spacing:-0.220px;transform:scaleX(0.967);transform-origin:0 50%;"><u>F</u>ile</span>
<span style="left:26px;top:20.70px;line-height:12px;font-family:'Liberation Serif',serif;font-size:8.9px;color:#000;letter-spacing:-0.074px;"><u>E</u>dit</span>
<span style="left:49px;top:20.70px;line-height:12px;font-family:'Liberation Serif',serif;font-size:8.9px;color:#000;letter-spacing:-0.080px;"><u>C</u>omposition</span>
<span style="left:103.5px;top:20.70px;line-height:12px;font-family:'Liberation Serif',serif;font-size:8.9px;color:#000;letter-spacing:-0.141px;"><u>L</u>ayer</span>
<span style="left:132.5px;top:20.70px;line-height:12px;font-family:'Liberation Serif',serif;font-size:8.9px;color:#000;letter-spacing:-0.005px;">Effec<u>t</u></span>
<span style="left:163px;top:20.70px;line-height:12px;font-family:'Liberation Serif',serif;font-size:8.9px;color:#000;letter-spacing:-0.220px;"><u>A</u>nimation</span>
<span style="left:208.5px;top:20.70px;line-height:12px;font-family:'Liberation Serif',serif;font-size:8.9px;color:#000;letter-spacing:-0.220px;transform:scaleX(0.953);transform-origin:0 50%;"><u>V</u>iew</span>
<span style="left:236px;top:20.70px;line-height:12px;font-family:'Liberation Serif',serif;font-size:8.9px;color:#000;letter-spacing:-0.203px;"><u>W</u>indow</span>
<span style="left:274px;top:20.70px;line-height:12px;font-family:'Liberation Serif',serif;font-size:8.9px;color:#000;letter-spacing:-0.066px;"><u>H</u>elp</span>
<div style="left:-4px;top:34.7px;width:274px;height:508.5px;background:#fff;border:1px solid #8c8a80;border-top:none;border-left:5px solid #b4b2a6;box-sizing:border-box;"></div>
<div style="left:1px;top:34.7px;width:268px;height:1.2px;background:#f1efe4;"></div>
<div style="left:198px;top:38px;width:70px;height:0.8px;background:#c9c7bd;"></div>
<div style="left:195.9px;top:36px;width:0.9px;height:506px;background:#cfcdc4;"></div>
<div style="left:270px;top:35px;width:0.9px;height:508.5px;background:#7c7a70;"></div>
<div style="left:1.5px;top:543px;width:270px;height:1px;background:#2a2a2a;"></div>
<span style="left:15px;top:37.15px;line-height:12px;font-family:'Liberation Serif',serif;font-size:8.9px;color:#000;letter-spacing:-0.220px;transform:scaleX(0.930);transform-origin:0 50%;"><u>N</u>ew</span>
<svg style="left:187px;top:38.50px" width="5" height="7"><path d="M0.3,0.3 L3.8,3.3 L0.3,6.3Z" fill="#000"/></svg>
<span style="left:15px;top:50.65px;line-height:12px;font-family:'Liberation Serif',serif;font-size:8.9px;color:#000;letter-spacing:-0.117px;"><u>O</u>pen Project...</span>
<span style="left:120px;top:50.65px;line-height:12px;font-family:'Liberation Serif',serif;font-size:8.9px;color:#000;letter-spacing:-0.206px;">Ctrl+O</span>
<span style="left:15px;top:64.15px;line-height:12px;font-family:'Liberation Serif',serif;font-size:8.9px;color:#000;letter-spacing:-0.130px;">Open Recent Projects</span>
<svg style="left:187px;top:65.50px" width="5" height="7"><path d="M0.3,0.3 L3.8,3.3 L0.3,6.3Z" fill="#000"/></svg>
<span style="left:15px;top:77.65px;line-height:12px;font-family:'Liberation Serif',serif;font-size:8.9px;color:#000;letter-spacing:-0.052px;">Browse in Bridge...</span>
<span style="left:120px;top:77.65px;line-height:12px;font-family:'Liberation Serif',serif;font-size:8.9px;color:#000;letter-spacing:-0.220px;">Ctrl+Alt+Shift+O</span>
<span style="left:15px;top:91.15px;line-height:12px;font-family:'Liberation Serif',serif;font-size:8.9px;color:#000;letter-spacing:-0.120px;">Browse Template Projects...</span>
<div style="left:2.3px;top:105.5px;width:191px;height:1px;background:#c2c0b6;"></div>
<span style="left:15px;top:111.40px;line-height:12px;font-family:'Liberation Serif',serif;font-size:8.9px;color:#000;letter-spacing:-0.220px;"><u>C</u>lose</span>
<span style="left:120px;top:111.40px;line-height:12px;font-family:'Liberation Serif',serif;font-size:8.9px;color:#000;letter-spacing:-0.151px;">Ctrl+W</span>
<span style="left:15px;top:124.90px;line-height:12px;font-family:'Liberation Serif',serif;font-size:8.9px;color:#000;letter-spacing:-0.121px;">Close Project</span>
<span style="left:15px;top:138.40px;line-height:12px;font-family:'Liberation Serif',serif;font-size:8.9px;color:#aca899;letter-spacing:-0.220px;transform:scaleX(0.976);transform-origin:0 50%;"><u>S</u>ave</span>
<span style="left:120px;top:138.40px;line-height:12px;font-family:'Liberation Serif',serif;font-size:8.9px;color:#aca899;letter-spacing:-0.125px;">Ctrl+S</span>
<span style="left:15px;top:151.90px;line-height:12px;font-family:'Liberation Serif',serif;font-size:8.9px;color:#000;letter-spacing:-0.100px;">Sa<u>v</u>e As...</span>
<span style="left:120px;top:151.90px;line-height:12px;font-family:'Liberation Serif',serif;font-size:8.9px;color:#000;letter-spacing:-0.143px;">Ctrl+Shift+S</span>
<span style="left:15px;top:165.40px;line-height:12px;font-family:'Liberation Serif',serif;font-size:8.9px;color:#000;letter-spacing:0.002px;">Save a Cop<u>y</u>...</span>
<span style="left:15px;top:178.90px;line-height:12px;font-family:'Liberation Serif',serif;font-size:8.9px;color:#000;letter-spacing:-0.098px;">Save a Copy As XML...</span>
<span style="left:15px;top:192.40px;line-height:12px;font-family:'Liberation Serif',serif;font-size:8.9px;color:#000;letter-spacing:-0.110px;">Increment and Save</span>
<span style="left:120px;top:192.40px;line-height:12px;font-family:'Liberation Serif',serif;font-size:8.9px;color:#000;letter-spacing:-0.191px;">Ctrl+Alt+Shift+S</span>
<span style="left:15px;top:205.90px;line-height:12px;font-family:'Liberation Serif',serif;font-size:8.9px;color:#aca899;letter-spacing:-0.029px;"><u>R</u>evert</span>
<div style="left:2.3px;top:220.25px;width:191px;height:1px;background:#c2c0b6;"></div>
<span style="left:15px;top:226.15px;line-height:12px;font-family:'Liberation Serif',serif;font-size:8.9px;color:#000;letter-spacing:-0.029px;"><u>I</u>mport</span>
<svg style="left:187px;top:227.50px" width="5" height="7"><path d="M0.3,0.3 L3.8,3.3 L0.3,6.3Z" fill="#000"/></svg>
<span style="left:15px;top:239.65px;line-height:12px;font-family:'Liberation Serif',serif;font-size:8.9px;color:#000;letter-spacing:-0.087px;">Import Recent Footage</span>
<svg style="left:187px;top:241.00px" width="5" height="7"><path d="M0.3,0.3 L3.8,3.3 L0.3,6.3Z" fill="#000"/></svg>
<div style="left:2.1px;top:252.1px;width:190.5px;height:13.25px;background:#316ac5;"></div>
<span style="left:15px;top:253.15px;line-height:12px;font-family:'Liberation Serif',serif;font-size:8.9px;color:#fff;letter-spacing:-0.026px;">E<u>x</u>port</span>
<svg style="left:187px;top:254.50px" width="5" height="7"><path d="M0.3,0.3 L3.8,3.3 L0.3,6.3Z" fill="#fff"/></svg>
<div style="left:2.3px;top:267.5px;width:191px;height:1px;background:#c2c0b6;"></div>
<span style="left:15px;top:273.40px;line-height:12px;font-family:'Liberation Serif',serif;font-size:8.9px;color:#000;letter-spacing:-0.106px;">Adobe Dynamic Link</span>
<svg style="left:187px;top:274.75px" width="5" height="7"><path d="M0.3,0.3 L3.8,3.3 L0.3,6.3Z" fill="#000"/></svg>
<div style="left:2.3px;top:287.75px;width:191px;height:1px;background:#c2c0b6;"></div>
<span style="left:15px;top:293.65px;line-height:12px;font-family:'Liberation Serif',serif;font-size:8.9px;color:#000;letter-spacing:-0.220px;transform:scaleX(0.974);transform-origin:0 50%;"><u>F</u>ind</span>
<span style="left:120px;top:293.65px;line-height:12px;font-family:'Liberation Serif',serif;font-size:8.9px;color:#000;letter-spacing:-0.125px;">Ctrl+F</span>
<div style="left:2.3px;top:308.0px;width:191px;height:1px;background:#c2c0b6;"></div>
<span style="left:15px;top:313.90px;line-height:12px;font-family:'Liberation Serif',serif;font-size:8.9px;color:#aca899;letter-spacing:-0.086px;">Add Footage to Comp</span>
<span style="left:120px;top:313.90px;line-height:12px;font-family:'Liberation Serif',serif;font-size:8.9px;color:#aca899;letter-spacing:-0.047px;">Ctrl+/</span>
<span style="left:15px;top:327.40px;line-height:12px;font-family:'Liberation Serif',serif;font-size:8.9px;color:#aca899;letter-spacing:-0.117px;">New Comp from Selection...</span>
<span style="left:15px;top:340.90px;line-height:12px;font-family:'Liberation Serif',serif;font-size:8.9px;color:#000;letter-spacing:-0.122px;">Consolid<u>a</u>te All Footage</span>
<span style="left:15px;top:354.40px;line-height:12px;font-family:'Liberation Serif',serif;font-size:8.9px;color:#000;letter-spacing:-0.106px;">Re<u>m</u>ove Unused Footage</span>
<span style="left:15px;top:367.90px;line-height:12px;font-family:'Liberation Serif',serif;font-size:8.9px;color:#000;letter-spacing:-0.070px;">Reduce Project</span>
<span style="left:15px;top:381.40px;line-height:12px;font-family:'Liberation Serif',serif;font-size:8.9px;color:#000;letter-spacing:-0.111px;">Collect Files...</span>
<span style="left:15px;top:394.90px;line-height:12px;font-family:'Liberation Serif',serif;font-size:8.9px;color:#000;letter-spacing:-0.034px;"><u>W</u>atch Folder...</span>
<span style="left:15px;top:408.40px;line-height:12px;font-family:'Liberation Serif',serif;font-size:8.9px;color:#000;letter-spacing:-0.165px;">Scripts</span>
<svg style="left:187px;top:409.75px" width="5" height="7"><path d="M0.3,0.3 L3.8,3.3 L0.3,6.3Z" fill="#000"/></svg>
<div style="left:2.3px;top:422.75px;width:191px;height:1px;background:#c2c0b6;"></div>
<span style="left:15px;top:428.65px;line-height:12px;font-family:'Liberation Serif',serif;font-size:8.9px;color:#000;letter-spacing:-0.049px;">Create Proxy</span>
<svg style="left:187px;top:430.00px" width="5" height="7"><path d="M0.3,0.3 L3.8,3.3 L0.3,6.3Z" fill="#000"/></svg>
<span style="left:15px;top:442.15px;line-height:12px;font-family:'Liberation Serif',serif;font-size:8.9px;color:#aca899;letter-spacing:-0.085px;">Set Proxy</span>
<svg style="left:187px;top:443.50px" width="5" height="7"><path d="M0.3,0.3 L3.8,3.3 L0.3,6.3Z" fill="#aca899"/></svg>
<span style="left:15px;top:455.65px;line-height:12px;font-family:'Liberation Serif',serif;font-size:8.9px;color:#aca899;letter-spacing:-0.081px;">Interpret Footage</span>
<svg style="left:187px;top:457.00px" width="5" height="7"><path d="M0.3,0.3 L3.8,3.3 L0.3,6.3Z" fill="#aca899"/></svg>
<span style="left:15px;top:469.15px;line-height:12px;font-family:'Liberation Serif',serif;font-size:8.9px;color:#aca899;letter-spacing:-0.127px;">Re<u>p</u>lace Footage</span>
<svg style="left:187px;top:470.50px" width="5" height="7"><path d="M0.3,0.3 L3.8,3.3 L0.3,6.3Z" fill="#aca899"/></svg>
<span style="left:15px;top:482.65px;line-height:12px;font-family:'Liberation Serif',serif;font-size:8.9px;color:#aca899;letter-spacing:-0.105px;">Re<u>l</u>oad Footage</span>
<span style="left:120px;top:482.65px;line-height:12px;font-family:'Liberation Serif',serif;font-size:8.9px;color:#aca899;letter-spacing:-0.209px;">Ctrl+Alt+L</span>
<span style="left:15px;top:496.15px;line-height:12px;font-family:'Liberation Serif',serif;font-size:8.9px;color:#aca899;letter-spacing:-0.057px;">Reveal in Explorer</span>
<span style="left:15px;top:509.65px;line-height:12px;font-family:'Liberation Serif',serif;font-size:8.9px;color:#aca899;letter-spacing:-0.071px;">Reveal in Bridge</span>
<div style="left:2.3px;top:524.0px;width:191px;height:1px;background:#c2c0b6;"></div>
<span style="left:15px;top:529.90px;line-height:12px;font-family:'Liberation Serif',serif;font-size:8.9px;color:#000;letter-spacing:-0.164px;"><u>P</u>roject Settings...</span>
<span style="left:120px;top:529.90px;line-height:12px;font-family:'Liberation Serif',serif;font-size:8.9px;color:#000;letter-spacing:-0.220px;">Ctrl+Alt+Shift+K</span>
<span style="left:210.5px;top:42.90px;line-height:12px;font-family:'Liberation Serif',serif;font-size:8.9px;color:#000;letter-spacing:-0.074px;">E<u>x</u>it</span>
<span style="left:231px;top:42.90px;line-height:12px;font-family:'Liberation Serif',serif;font-size:8.9px;color:#000;letter-spacing:-0.206px;">Ctrl+Q</span>
<div style="left:193.3px;top:250px;width:150px;height:212.4px;background:#fff;border:1px solid #b4b2a8;border-right-color:#77756c;border-bottom-color:#77756c;box-sizing:border-box;box-shadow:1.3px 1.3px 1.5px rgba(0,0,0,0.5);"></div>
<span style="left:208px;top:253.15px;line-height:12px;font-family:'Liberation Serif',serif;font-size:8.9px;color:#000;letter-spacing:-0.118px;">Adobe Clip Notes...</span>
<span style="left:208px;top:266.65px;line-height:12px;font-family:'Liberation Serif',serif;font-size:8.9px;color:#000;letter-spacing:-0.150px;">Adobe Flash Player (SWF)...</span>
<span style="left:208px;top:280.15px;line-height:12px;font-family:'Liberation Serif',serif;font-size:8.9px;color:#000;letter-spacing:-0.135px;">Adobe Flash Professional (XFL)...</span>
<span style="left:208px;top:293.65px;line-height:12px;font-family:'Liberation Serif',serif;font-size:8.9px;color:#000;letter-spacing:-0.113px;">Adobe Premiere Pro Project ...</span>
<div style="left:195.5px;top:308.0px;width:146px;height:1px;background:#c2c0b6;"></div>
<span style="left:208px;top:313.90px;line-height:12px;font-family:'Liberation Serif',serif;font-size:8.9px;color:#000;letter-spacing:-0.103px;">3G...</span>
<span style="left:208px;top:327.40px;line-height:12px;font-family:'Liberation Serif',serif;font-size:8.9px;color:#000;letter-spacing:-0.127px;">AIFF...</span>
<span style="left:208px;top:340.90px;line-height:12px;font-family:'Liberation Serif',serif;font-size:8.9px;color:#000;letter-spacing:-0.220px;transform:scaleX(0.979);transform-origin:0 50%;">AU...</span>
<span style="left:208px;top:354.40px;line-height:12px;font-family:'Liberation Serif',serif;font-size:8.9px;color:#000;letter-spacing:-0.049px;">AVI...</span>
<span style="left:208px;top:367.90px;line-height:12px;font-family:'Liberation Serif',serif;font-size:8.9px;color:#000;letter-spacing:-0.220px;transform:scaleX(0.928);transform-origin:0 50%;">DV</span>
<svg style="left:221px;top:368.85px;" width="18.5" height="9.7" fill="none" stroke="#000" stroke-width="1.15" stroke-linecap="square"><path transform="translate(0.21,0.2) scale(0.829)" d="M2.5,1 L7.5,1 L7.5,3.5 L2.5,3.5 Z M1.5,5 L8.5,5 L8.5,8 L1.5,8 Z M5,0 L5,10"/><path transform="translate(8.96,0.2) scale(0.829)" d="M1,1 L2,2 M0.5,4 L1.5,5 M0.5,9.5 L2,7 M6.5,0.3 L6.5,1.5 M3.5,2 L9.7,2 M6,2 L4,5 L8.5,4.5 M8,3.5 L9.2,5 M4.5,6 L3.8,10 M6.5,6 L6.5,10 M8.5,6 L8.5,9.5 L9.9,9.5"/></svg>
<span style="left:239.7px;top:367.90px;line-height:12px;font-family:'Liberation Serif',serif;font-size:8.9px;color:#000;letter-spacing:-0.219px;">...</span>
<span style="left:208px;top:381.40px;line-height:12px;font-family:'Liberation Serif',serif;font-size:8.9px;color:#000;letter-spacing:-0.156px;">FLC...</span>
<div style="left:194.8px;top:393.75px;width:147.3px;height:13.3px;background:#316ac5;"></div>
<span style="left:208px;top:394.90px;line-height:12px;font-family:'Liberation Serif',serif;font-size:8.9px;color:#fff;letter-spacing:-0.135px;">MPEG-4...</span>
<span style="left:208px;top:408.40px;line-height:12px;font-family:'Liberation Serif',serif;font-size:8.9px;color:#000;letter-spacing:-0.220px;transform:scaleX(0.983);transform-origin:0 50%;">QuickTime</span>
<svg style="left:248px;top:409.35px;" width="18.5" height="9.7" fill="none" stroke="#000" stroke-width="1.15" stroke-linecap="square"><path transform="translate(0.21,0.2) scale(0.829)" d="M1,0.5 L5,0.5 L5,3 L1,3 Z M1,1.8 L5,1.8 M0.3,4 L5.7,4 M1.5,5 L4.5,5 L4.5,6.5 L1.5,6.5 Z M3,6.5 L3,10 M1.5,8 L0.5,9.5 M4.5,8 L5.5,9.5 M9,0.5 L6.5,3 M9,3.5 L6.5,6 M9.5,6.5 L6,10"/><path transform="translate(8.96,0.2) scale(0.829)" d="M3,0.5 L3,5 L1,10 M3,3.5 L9.3,3.5 M6.5,0.5 L6.5,3.5 M3,5.7 L8,5.7 L8,10"/></svg>
<span style="left:266.7px;top:408.40px;line-height:12px;font-family:'Liberation Serif',serif;font-size:8.9px;color:#000;letter-spacing:-0.219px;">...</span>
<span style="left:208px;top:421.90px;line-height:12px;font-family:'Liberation Serif',serif;font-size:8.9px;color:#000;letter-spacing:-0.049px;">Wave...</span>
<svg style="left:208px;top:436.35px;" width="62.2" height="9.7" fill="none" stroke="#aca899" stroke-width="1.15" stroke-linecap="square"><path transform="translate(0.21,0.2) scale(0.829)" d="M4,0.5 L0.8,4.5 M6,0.5 L9.5,4.5 M2.5,5.5 L8,5.5 L7.5,9.7 L6.3,9.5 M5,5.5 L2,10"/><path transform="translate(8.96,0.2) scale(0.829)" d="M0.5,2 L5,2 M2.7,0.5 L2.7,4.5 M0.3,4.5 L5.2,4.5 M0.5,7 L5,7 M2.7,5.5 L2.7,9.5 M0.3,9.5 L5.2,9.5 M5.5,3 L10,3 M8.5,0.5 L8.5,10 L7.5,10 M6.5,5 L7,6.5"/><path transform="translate(17.71,0.2) scale(0.829)" d="M0.5,3 L4,3 M2.3,0.5 L2.3,10 L1.3,10 M0.5,7 L4,5.5 M5.5,0.5 L5.5,3.5 L9.7,3.5 M9,1 L6,2 M5.5,5 L9,5 L9,10 L5.5,10 Z M5.5,7.5 L9,7.5"/><path transform="translate(26.46,0.2) scale(0.829)" d="M2,1.5 L8,1.5 M0.5,4 L9.5,4 M5,4 L5,10 L4,10 M3,6 L1,9 M7,6 L9,9"/><path transform="translate(35.21,0.2) scale(0.829)" d="M0.5,1 L5.5,1 M0.5,3.5 L5.5,3.5 M2,1 L1,6 M4,1 L4,6 M7,1 L7,4.5 M9,0.5 L9,6 L8.3,6 M2,7.7 L8,7.7 M5,6.5 L5,10 M0.5,10 L9.5,10"/><path transform="translate(43.96,0.2) scale(0.829)" d="M1,0.5 L5,0.5 L5,3 L1,3 Z M1,1.8 L5,1.8 M0.3,4 L5.7,4 M1.5,5 L4.5,5 L4.5,6.5 L1.5,6.5 Z M3,6.5 L3,10 M1.5,8 L0.5,9.5 M4.5,8 L5.5,9.5 M9,0.5 L6.5,3 M9,3.5 L6.5,6 M9.5,6.5 L6,10"/><path transform="translate(52.71,0.2) scale(0.829)" d="M3,0.5 L3,5 L1,10 M3,3.5 L9.3,3.5 M6.5,0.5 L6.5,3.5 M3,5.7 L8,5.7 L8,10"/></svg>
<span style="left:270.45px;top:435.40px;line-height:12px;font-family:'Liberation Serif',serif;font-size:8.9px;color:#aca899;letter-spacing:-0.219px;">...</span>
<svg style="left:208px;top:449.85px;" width="36.0" height="9.7" fill="none" stroke="#000" stroke-width="1.15" stroke-linecap="square"><path transform="translate(0.21,0.2) scale(0.829)" d="M5,0 L5,1.2 M1.5,1.5 L9.5,1.5 M1.5,1.5 L1.5,6 L0.5,10 M3.5,3 L8,3 L6,4.5 M3,5.5 L9.5,5.5 L8.5,6.7 M6,4.5 L6,10 L5,10"/><path transform="translate(8.96,0.2) scale(0.829)" d="M0.5,1 L6,1 M3,1 L1,5 M2,3.5 L5,3.5 L2,9.5 M2.5,5.5 L3.5,6.5 M7.5,1.5 L7.5,7 M9.5,0.5 L9.5,10 L8.5,10"/><path transform="translate(17.71,0.2) scale(0.829)" d="M1,0.5 L5,0.5 L5,3 L1,3 Z M1,1.8 L5,1.8 M0.3,4 L5.7,4 M1.5,5 L4.5,5 L4.5,6.5 L1.5,6.5 Z M3,6.5 L3,10 M1.5,8 L0.5,9.5 M4.5,8 L5.5,9.5 M9,0.5 L6.5,3 M9,3.5 L6.5,6 M9.5,6.5 L6,10"/><path transform="translate(26.46,0.2) scale(0.829)" d="M2.5,0.5 L0.5,4.5 M1.8,3 L1.8,10 M5.5,0.5 L4,2.5 M5.5,1 L8,1 L7,2.5 M4,2.5 L9,2.5 L9,4.5 L4,4.5 Z M6.5,2.5 L6.5,4.5 M6,4.5 L3.5,7 M6,5 L7,10 M6,6.5 L3.5,8.5 M6.3,8 L3.5,10 M8.5,5.5 L7,6.5 M7,6.5 L9.8,10"/></svg>
<span style="left:244.2px;top:448.90px;line-height:12px;font-family:'Liberation Serif',serif;font-size:8.9px;color:#000;letter-spacing:-0.219px;">...</span>
<div style="left:-4px;top:577.3px;width:968px;height:26.7px;background:linear-gradient(#3a82ee 0px,#2c6ce6 1.6px,#245edc 4.1px,#2461de 13.6px,#2258d6 20px,#1c46b8 22.7px,#1c46b8 27px);"></div>
<div style="left:-4px;top:576.8px;width:968px;height:1px;background:#5a8cf0;"></div>
<div style="left:-4px;top:577.5px;width:71px;height:26.5px;background:linear-gradient(#6cc06a 0px,#46a546 2.2px,#3c9b3c 9px,#369436 17px,#2c802e 22.5px,#2c802e 27px);border-radius:0 8px 9px 0;box-shadow:1.5px 0 2px rgba(0,0,60,0.45), inset -3px 0 3px rgba(20,80,20,0.45);"></div>
<svg style="left:7.5px;top:581.5px" width="16" height="15"><path d="M1.5,2.5 q3,-2 6,-0.3 l-0.8,4.6 q-3,-1.5 -6,0.2z" fill="#e8502c"/><path d="M8.6,2.6 q3,1.3 5.8,-0.6 l-0.9,4.7 q-2.6,1.7 -5.7,0.4z" fill="#6cc04a"/><path d="M0.5,8.2 q3,-1.8 6,-0.2 l-0.8,4.6 q-3,-1.5 -6,0.2z" fill="#4a8ce8"/><path d="M7.6,8.4 q3,1.3 5.8,-0.6 l-0.9,4.7 q-2.6,1.7 -5.7,0.4z" fill="#f0c030"/></svg>
<svg style="left:28.5px;top:583.65px;transform:skewX(-12deg);opacity:0.7;" width="24.6" height="12.3" fill="none" stroke="#1f5a22" stroke-width="1.21" stroke-linecap="square"><path transform="translate(0.27,0.2) scale(1.076)" d="M1,1 L1,10 M1,1 L4,1 M1,3 L4,3 M4,1 L4,5 M1,5 L4,5 M9,1 L9,10 L8,10 M6,1 L9,1 M6,3 L9,3 M6,1 L6,5 M6,5 L9,5 M3,6.5 L7,6.5 M2.5,8 L7.5,8 M4,6.5 L3.3,10 M6,6.5 L6,10"/><path transform="translate(12.07,0.2) scale(1.076)" d="M2.5,0.5 L1.5,6 L4,9.5 M4,3.5 L0.8,9.8 M0.3,3.8 L4.6,3.8 M7,0.5 L5.5,4 L9.3,3.8 M8,2.3 L9.5,4.2 M5.5,6 L9,6 L9,9.5 L5.5,9.5 Z"/></svg>
<svg style="left:27.8px;top:583.05px;transform:skewX(-12deg);" width="24.6" height="12.3" fill="none" stroke="#fbfff4" stroke-width="1.16" stroke-linecap="square"><path transform="translate(0.27,0.2) scale(1.076)" d="M1,1 L1,10 M1,1 L4,1 M1,3 L4,3 M4,1 L4,5 M1,5 L4,5 M9,1 L9,10 L8,10 M6,1 L9,1 M6,3 L9,3 M6,1 L6,5 M6,5 L9,5 M3,6.5 L7,6.5 M2.5,8 L7.5,8 M4,6.5 L3.3,10 M6,6.5 L6,10"/><path transform="translate(12.07,0.2) scale(1.076)" d="M2.5,0.5 L1.5,6 L4,9.5 M4,3.5 L0.8,9.8 M0.3,3.8 L4.6,3.8 M7,0.5 L5.5,4 L9.3,3.8 M8,2.3 L9.5,4.2 M5.5,6 L9,6 L9,9.5 L5.5,9.5 Z"/></svg>
<svg style="left:76.5px;top:582.7px" width="14" height="12"><path d="M0.5,2 h4 l1,1.5 h6.5 v7.5 h-11.5z" fill="#e8c050" stroke="#a87c18" stroke-width="0.6"/><circle cx="5" cy="6.5" r="2.6" fill="#fff8d0"/><circle cx="9.5" cy="8" r="2" fill="#f0e090"/></svg>
<svg style="left:94.5px;top:582.7px" width="11" height="12"><path d="M1,1.5 L8,0.5 L9.5,10 L2.5,11.5Z" fill="#68b8f0" stroke="#3a88c8" stroke-width="0.6"/><path d="M2.5,3 L7.5,2.3 L8.3,8.5 L3.4,9.3Z" fill="#b4e0ff"/></svg>
<svg style="left:112.5px;top:581.7px" width="11" height="14"><path d="M2,5 h7 l-1,8 h-5z" fill="#d0a040" stroke="#805818" stroke-width="0.6"/><path d="M3,5 L2,0.5 M5.5,5 V0 M8,5 L9,1" stroke="#c04030" stroke-width="1.3"/><path d="M4.2,5 L3.7,1.5 M6.8,5 L7.2,1.2" stroke="#e8d060" stroke-width="1"/></svg>
<svg style="left:128.5px;top:582.2px" width="14" height="13"><circle cx="6.5" cy="7" r="4.6" fill="none" stroke="#4a9cf0" stroke-width="2.2"/><path d="M2.5,7 h8" stroke="#4a9cf0" stroke-width="1.8"/><path d="M0.5,10 Q2,2 13,1" fill="none" stroke="#e8c040" stroke-width="1"/></svg>
<svg style="left:146.0px;top:582.2px" width="13" height="13"><circle cx="6.5" cy="6.5" r="6" fill="#e8c030"/><path d="M6.5,6.5 L0.9,4 A6,6 0 0 1 12.1,4Z" fill="#d83a2c"/><path d="M6.5,6.5 L0.9,4 A6,6 0 0 0 5.5,12.4Z" fill="#3aa048"/><circle cx="6.5" cy="6.5" r="2.7" fill="#fff"/><circle cx="6.5" cy="6.5" r="2" fill="#4a86e8"/></svg>
<svg style="left:163.0px;top:582.2px" width="13" height="13"><circle cx="6.5" cy="6.5" r="6" fill="#e8641c"/><circle cx="6" cy="6" r="3.4" fill="#3a4cb0"/><path d="M1,5 Q3,0.5 8,1 Q5,2.5 6,5 Q9,5 9.5,8 Q8,11.5 4,11 Q0.5,9 1,5" fill="#f4a428" opacity="0.85"/></svg>
<svg style="left:179.5px;top:582.2px" width="13" height="13"><rect x="1" y="1" width="11" height="11" rx="2.5" fill="#3f7fd8" stroke="#cfe0f8" stroke-width="0.8"/><path d="M9.3,4.8 A3.2,3.2 0 1 0 9.3,8.4 M5.5,6.6 h4.2" fill="none" stroke="#f4f8ff" stroke-width="1.6"/></svg>
<svg style="left:196.5px;top:583.2px" width="14" height="12"><rect x="0.5" y="3.5" width="9" height="7" fill="#5a90e0" stroke="#d8e6fa" stroke-width="0.8"/><rect x="5" y="1" width="8" height="6" fill="#e8f0fc" stroke="#2a58a8" stroke-width="0.8"/><path d="M2,6 h4 M2,8 h5" stroke="#f0f6ff"/></svg>
<svg style="left:214.5px;top:582.2px" width="14" height="13"><rect x="0.5" y="0.5" width="12.5" height="12" fill="#f6f6f6"/><path d="M2,2.5 L4.8,10.5 L7.6,2.5" fill="none" stroke="#d02020" stroke-width="1.7"/><path d="M9,3 h3 M9,6.3 h3 M9,9.6 h3 M9,3 V10 M12,3 V10" stroke="#208040" stroke-width="1.1"/></svg>
<span style="left:245.5px;top:578.00px;line-height:12px;font-family:'Liberation Sans',sans-serif;font-size:8px;color:#dce8ff;font-weight:bold;">»</span>
<div style="left:257.3px;top:579.7px;width:118.5px;height:18.3px;background:linear-gradient(#5a98f8 0%,#3c80f0 12%,#3a7cee 70%,#3472e4 100%);border-radius:2.5px;border:1px solid #2c62d0;box-sizing:border-box;"></div>
<div style="left:377px;top:579.7px;width:118.5px;height:18.3px;background:linear-gradient(#5a98f8 0%,#3c80f0 12%,#3a7cee 70%,#3472e4 100%);border-radius:2.5px;border:1px solid #2c62d0;box-sizing:border-box;"></div>
<div style="left:496.5px;top:579.7px;width:119px;height:18.3px;background:linear-gradient(#1c4eb4 0%,#1e52b8 60%,#2258c4 100%);border-radius:2.5px;border:1px solid #163a94;box-sizing:border-box;"></div>
<svg style="left:262px;top:583px" width="13" height="11"><path d="M0.5,1.5 h4 l1,1.5 h6.5 v7.5 h-11.5z" fill="#e8c050" stroke="#a87c18" stroke-width="0.6"/><circle cx="5" cy="6" r="2.3" fill="#fff8d0"/><circle cx="9" cy="7.5" r="1.8" fill="#f0e090"/></svg>
<span style="left:278.5px;top:582.70px;line-height:12px;font-family:'Liberation Serif',serif;font-size:8.9px;color:#fff;letter-spacing:0.062px;">P8127</span>
<svg style="left:383.5px;top:582.5px" width="13" height="13"><circle cx="6.5" cy="6.5" r="6" fill="#e8c030"/><path d="M6.5,6.5 L0.9,4 A6,6 0 0 1 12.1,4Z" fill="#d83a2c"/><path d="M6.5,6.5 L0.9,4 A6,6 0 0 0 5.5,12.4Z" fill="#3aa048"/><circle cx="6.5" cy="6.5" r="2.7" fill="#fff"/><circle cx="6.5" cy="6.5" r="2" fill="#4a86e8"/></svg>
<svg style="left:399px;top:584.30px;" width="28.0" height="10" fill="none" stroke="#fff" stroke-width="1.11" stroke-linecap="square"><path transform="translate(0.21,0.2) scale(0.857)" d="M2.5,0.3 L2.5,1.5 M0.5,2 L4.5,2 M1.5,3 L2,4.5 M3.5,3 L3,4.5 M0.3,5 L4.7,5 M0.5,7 L4.5,7 M2.5,5 L2.5,10 M2.5,7 L0.5,9.5 M2.5,7 L4.5,9 M9,0.5 L6,1.5 L6,5 L5.3,10 M6,4.5 L9.7,4.5 M8,4.5 L8,10"/><path transform="translate(9.21,0.2) scale(0.857)" d="M4,0.5 L0.8,4.5 M6,0.5 L9.5,4.5 M2.5,5.5 L8,5.5 L7.5,9.7 L6.3,9.5 M5,5.5 L2,10"/><path transform="translate(18.21,0.2) scale(0.857)" d="M1,1 L9,1 M5,1 L4.5,2.5 M2.5,2.5 L7.5,2.5 L7.5,7.5 L2.5,7.5 Z M2.5,4.2 L7.5,4.2 M2.5,5.8 L7.5,5.8 M4,8 L1.5,10 M6,8 L8.5,10"/></svg>
<span style="left:429.5px;top:582.70px;line-height:12px;font-family:'Liberation Serif',serif;font-size:8.9px;color:#fff;letter-spacing:-0.220px;">- Google</span>
<svg style="left:461px;top:584.30px;" width="19.0" height="10" fill="none" stroke="#fff" stroke-width="1.11" stroke-linecap="square"><path transform="translate(0.21,0.2) scale(0.857)" d="M1,1 L2,2 M0.5,4 L1.5,5 M0.5,9.5 L2,7 M3.5,1 L6,1 M3.5,3 L6.5,3 M4.5,1 L4.5,5 M3,5 L7,5 M5,5 L5,9 M3,7 L7,7 M3,9.5 L7,9.5 M8,1.5 L8,7 M9.5,0.5 L9.5,10 L8.7,10"/><path transform="translate(9.21,0.2) scale(0.857)" d="M1,0.5 L4.5,0.5 L4.5,4.5 L1,4.5 Z M1,2.5 L4.5,2.5 M6,0.3 L5.5,2 M6,1 L9.5,1 M6,3 L9,3 M5.5,4.5 L9.5,4.5 M2.5,5.5 L7.5,5.5 L7.5,8.5 L2.5,8.5 Z M2.5,7 L7.5,7 M4,8.5 L1.5,10 M6,8.5 L6,10 L9.3,10"/></svg>
<span style="left:480.5px;top:582.70px;line-height:12px;font-family:'Liberation Serif',serif;font-size:8.9px;color:#fff;letter-spacing:0.115px;">...</span>
<div style="left:504px;top:582.5px;width:12px;height:11.5px;background:linear-gradient(#c0c0c0,#8a8a8a);border:1px solid #444;box-sizing:border-box;"></div>
<span style="left:505.8px;top:582.50px;line-height:12px;font-family:'Liberation Sans',sans-serif;font-size:7px;color:#1a1a1a;font-weight:bold;letter-spacing:-0.220px;transform:scaleX(0.940);transform-origin:0 50%;">Ae</span>
<span style="left:520px;top:582.70px;line-height:12px;font-family:'Liberation Serif',serif;font-size:8.9px;color:#fff;font-weight:bold;letter-spacing:-0.220px;">Adobe After Effects - ...</span>
<svg style="left:761px;top:582.5px" width="60" height="14"><rect x="1" y="4.5" width="11.5" height="6.5" rx="1" fill="#2a3c78" stroke="#e4ecff" stroke-width="0.9"/><path d="M2.5,6.8 h8.5 M3,9 h7.5" stroke="#e4ecff" stroke-width="0.9" stroke-dasharray="1.3,0.8"/><path d="M4,4.5 Q4,2.5 7,2.5 T9.5,1" fill="none" stroke="#e4ecff" stroke-width="0.8"/><path d="M21,11.5 L26,5.5 L28,7.5 L23,12.5z" fill="#d8e4f8" stroke="#1c2c60" stroke-width="0.7"/><path d="M26,5.5 L28.5,2 L30.5,4 L28,7.5z" fill="#1c2c60"/><rect x="37" y="2.5" width="10" height="7" fill="#1c2c70" stroke="#e8f0ff" stroke-width="0.9"/><path d="M39,8.5 L44,4 M41.5,9.5 v2 h-2 h5" stroke="#e8f0ff" stroke-width="1" fill="none"/><path d="M45,2 l2,2" stroke="#f0d040" stroke-width="1.3"/></svg>
<div style="left:817.5px;top:577.3px;width:146.5px;height:26.7px;background:linear-gradient(#28a4f4 0px,#1596ee 2.3px,#128ee8 11.3px,#1082dc 20px,#0c6cc0 22.7px,#0c6cc0 27px);box-shadow:-1px 0 0 #0c58b8, inset 1px 0 0 #48b8f8;"></div>
<svg style="left:823px;top:582px" width="86" height="14">
<circle cx="7" cy="6.5" r="5.8" fill="#f0d020" stroke="#6a5800" stroke-width="0.7"/><path d="M4,4 Q7,9 10,4 M7,7 v3.5" stroke="#3a3000" stroke-width="1.4" fill="none"/><circle cx="9.5" cy="9.5" r="1.7" fill="#c03020"/>
<rect x="16" y="1" width="6" height="11.5" fill="#e8d820"/><rect x="22" y="1" width="6.5" height="11.5" fill="#d42020"/><path d="M17,3 h4 l-4,7.5 h4" stroke="#a01010" stroke-width="1.3" fill="none"/><path d="M23,11 L25.2,2.5 L27.5,11 M24,8 h2.5" stroke="#f8f0a0" stroke-width="1.2" fill="none"/>
<path d="M31,9.5 l4,-6 l5,2.5 l-3.5,5.5z" fill="#e8e0d0" stroke="#705040" stroke-width="0.6"/><path d="M33,4.5 l3.5,-2.5 l2,1.3" stroke="#c84030" stroke-width="1.5" fill="none"/><path d="M31,10 h8" stroke="#8898b0" stroke-width="1.5"/>
<rect x="43.5" y="1" width="11.5" height="11.5" fill="#1818b0" stroke="#e8e8ff" stroke-width="0.8"/><path d="M46.5,3.3 v7 l6,-3.5z" fill="#fff"/>
<rect x="57" y="3" width="7" height="5.5" fill="#6878c8" stroke="#d0d8f0" stroke-width="0.7"/><rect x="61" y="5.5" width="7" height="5.5" fill="#5060a8" stroke="#d0d8f0" stroke-width="0.7"/><path d="M58,11.5 h5" stroke="#c8c8c8"/>
<circle cx="76.5" cy="6.5" r="5" fill="#a8a8b0" stroke="#585860" stroke-width="0.7"/><path d="M74,9 L75,4.5 L78.5,3.5 L79,8z" fill="#e8e8e8" stroke="#555" stroke-width="0.5"/><path d="M73.5,10 l2,-2" stroke="#c03020" stroke-width="1.2"/>
</svg>
<svg style="left:909px;top:584.30px;" width="19.0" height="10" fill="none" stroke="#fff" stroke-width="1.11" stroke-linecap="square"><path transform="translate(0.21,0.2) scale(0.857)" d="M0.5,1 L9.5,1 M5,1 L5,10 M5.5,3.5 L8,5.5"/><path transform="translate(9.21,0.2) scale(0.857)" d="M3.5,0.5 L1.5,3.5 M2.5,2 L9,2 M0.5,5.5 L9.5,5.5 M5,2 L5,10"/></svg>
<span style="left:930px;top:582.80px;line-height:12px;font-family:'Liberation Serif',serif;font-size:8.9px;color:#fff;letter-spacing:-0.044px;">08:25</span>
</div></div></body></html>
